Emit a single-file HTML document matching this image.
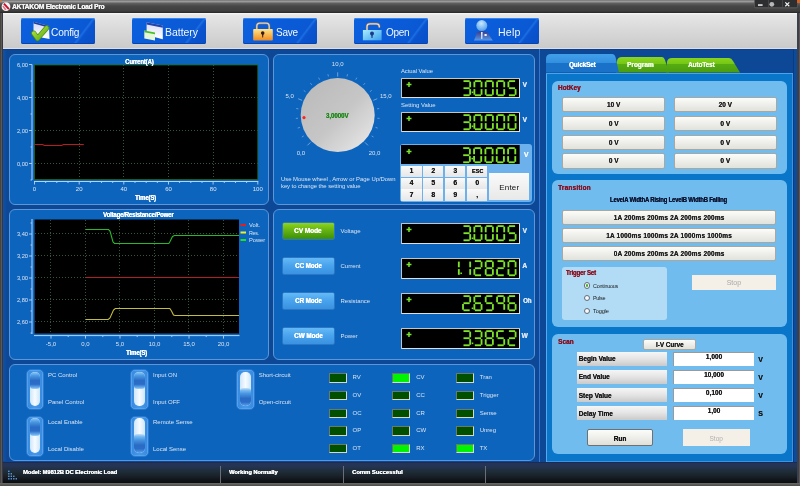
<!DOCTYPE html><html><head><meta charset="utf-8"><style>html,body{margin:0;padding:0;width:800px;height:486px;overflow:hidden;background:#3b3b3b}body{position:relative;font-family:"Liberation Sans",sans-serif}span{-webkit-font-smoothing:antialiased}</style></head><body><div style="position:absolute;left:0;top:0;width:800px;height:486px;background:#3a3633"></div><div style="position:absolute;left:0px;top:13px;width:3px;height:470px;background:linear-gradient(90deg,#454545 0,#454545 1px,#5e5852 1px,#5e5852 2.5px,#3a3640 2.5px)"></div><div style="position:absolute;left:797px;top:13px;width:3px;height:470px;background:linear-gradient(90deg,#3a4050 0,#3a4050 1.8px,#605850 1.8px,#605850 2.6px,#454545 2.6px)"></div><div style="position:absolute;left:0px;top:0px;width:800px;height:13px;background:linear-gradient(#747474 0,#9a9a9a 1.5px,#5e5e5e 3.5px,#474747 6px,#3e3e3e 11px,#2c2c2c 12.5px)"></div><div style="position:absolute;left:3px;top:13px;width:794px;height:36px;background:linear-gradient(#fafafa 0,#e6e6e6 2px,#d8d8d8 50%,#cbcbcb 34.5px,#dcdcec 35.5px)"></div><div style="position:absolute;left:3px;top:49px;width:794px;height:413px;background:linear-gradient(#0a3c86 0,#0d4896 1.5px)"></div><div style="position:absolute;left:3px;top:50px;width:4px;height:411px;background:linear-gradient(90deg,#0f52aa,#0d4896)"></div><div style="position:absolute;left:792.5px;top:49px;width:4.5px;height:413px;background:linear-gradient(90deg,#0a3a80 0,#0a3a80 1px,#0c4a9a 1.5px)"></div><div style="position:absolute;left:3px;top:461.5px;width:794px;height:21.5px;background:linear-gradient(#15244a 0,#24345a 1.2px,#243454 4px,#1e2c36 10px,#181e26 15px,#0c0e12 20px,#0a0c10 21.5px)"></div><div style="position:absolute;left:0px;top:483px;width:800px;height:3px;background:linear-gradient(#6a6a66,#4c4c4a)"></div><svg style="position:absolute;left:0;top:0" width="13" height="13" viewBox="0 0 13 13"><rect x="0" y="0" width="1.5" height="1.5" fill="#e07020"/><circle cx="6" cy="6.7" r="4.4" fill="#f4f4f4"/><path d="M3.2 4.2 L4.6 3 L9.6 8.6 L8.2 9.8 Z" fill="#c8102a"/><path d="M2.4 6.5 L3.4 5.6 L6.6 9.6 L5 10.3 Z" fill="#d84050" opacity="0.7"/></svg><svg style="position:absolute;left:753.5px;top:0" width="44" height="9" viewBox="0 0 44 9"><rect x="0.3" y="-2" width="43.4" height="9.8" rx="1.5" fill="#2c2e30" stroke="#767676" stroke-width="0.6"/><line x1="14.5" y1="0" x2="14.5" y2="7.5" stroke="#555" stroke-width="0.6"/><line x1="28.5" y1="0" x2="28.5" y2="7.5" stroke="#555" stroke-width="0.6"/><rect x="4" y="4.3" width="4.6" height="1.5" fill="#f0f0f0"/><circle cx="17.8" cy="4.3" r="2.4" fill="#b8b8b8"/><path d="M31.3 2.4 L35.3 6.2 M35.3 2.4 L31.3 6.2" stroke="#f4f4f4" stroke-width="1.2"/></svg><div style="position:absolute;left:797px;top:0px;width:3px;height:3px;background:#d86020"></div><div style="position:absolute;left:20.5px;top:18px;width:74px;height:26px;border-radius:2px;background:linear-gradient(127deg,#0c60de 0%,#0a58d4 76%,#1c6ee2 78%,#0a54d0 81%,#084ec6 100%);box-shadow:inset 0 1px 0 #3486f0, inset 0 -1px 0 #0644b0"></div><div style="position:absolute;left:131.5px;top:18px;width:74px;height:26px;border-radius:2px;background:linear-gradient(127deg,#0c60de 0%,#0a58d4 76%,#1c6ee2 78%,#0a54d0 81%,#084ec6 100%);box-shadow:inset 0 1px 0 #3486f0, inset 0 -1px 0 #0644b0"></div><div style="position:absolute;left:242.5px;top:18px;width:74px;height:26px;border-radius:2px;background:linear-gradient(127deg,#0c60de 0%,#0a58d4 76%,#1c6ee2 78%,#0a54d0 81%,#084ec6 100%);box-shadow:inset 0 1px 0 #3486f0, inset 0 -1px 0 #0644b0"></div><div style="position:absolute;left:353.5px;top:18px;width:74px;height:26px;border-radius:2px;background:linear-gradient(127deg,#0c60de 0%,#0a58d4 76%,#1c6ee2 78%,#0a54d0 81%,#084ec6 100%);box-shadow:inset 0 1px 0 #3486f0, inset 0 -1px 0 #0644b0"></div><div style="position:absolute;left:464.5px;top:18px;width:74px;height:26px;border-radius:2px;background:linear-gradient(127deg,#0c60de 0%,#0a58d4 76%,#1c6ee2 78%,#0a54d0 81%,#084ec6 100%);box-shadow:inset 0 1px 0 #3486f0, inset 0 -1px 0 #0644b0"></div><svg style="position:absolute;left:26px;top:17px" width="30" height="28" viewBox="0 0 30 28"><defs><linearGradient id="dc" x1="0" y1="0" x2="0" y2="1"><stop offset="0" stop-color="#d4d8f4"/><stop offset="1" stop-color="#ffffff"/></linearGradient><linearGradient id="ck" x1="0" y1="0" x2="1" y2="1"><stop offset="0" stop-color="#b4e840"/><stop offset="1" stop-color="#5aa812"/></linearGradient></defs><path d="M7.5 4.8 L23 9 L23.5 22 L7.5 19 Z" fill="url(#dc)"/><path d="M7.5 4.8 L23 9 L23 10.8 L7.5 6.6 Z" fill="#22409a"/><polyline points="7.8,16.2 11.6,21.4 20.6,11" fill="none" stroke="#4a8c10" stroke-width="5.2" stroke-linecap="round" stroke-linejoin="round"/><polyline points="7.8,16.2 11.6,21.4 20.6,11" fill="none" stroke="url(#ck)" stroke-width="3.8" stroke-linecap="round" stroke-linejoin="round"/></svg><svg style="position:absolute;left:138px;top:17px" width="30" height="28" viewBox="0 0 30 28"><defs><linearGradient id="bw" x1="0" y1="0" x2="0" y2="1"><stop offset="0" stop-color="#dcdcf8"/><stop offset="1" stop-color="#ffffff"/></linearGradient></defs><path d="M8.6 5.2 L24.8 8.6 L24.8 22.2 L8.6 18 Z" fill="url(#bw)"/><path d="M8.6 5.2 L24.8 8.6 L24.8 10.8 L8.6 7.4 Z" fill="#2444a8"/><path d="M6.3 13.5 L17 15.5 L17 23.6 L6.3 21.6 Z" fill="#e4f8d8"/><path d="M6.3 13.5 L17 15.5 L17 17.2 L6.3 15.2 Z" fill="#44c024"/></svg><svg style="position:absolute;left:248px;top:17px" width="30" height="28" viewBox="0 0 30 28"><defs><linearGradient id="lk" x1="0" y1="0" x2="0" y2="1"><stop offset="0" stop-color="#ffe488"/><stop offset="1" stop-color="#f08a1c"/></linearGradient></defs><path d="M8.8 12.5 V9.2 Q8.8 6.2 11.8 6.2 H18.2 Q21.2 6.2 21.2 9.2 V12.5" fill="none" stroke="#6a6a6a" stroke-width="2.4"/><path d="M8.8 12.5 V9.2 Q8.8 6.2 11.8 6.2 H18.2 Q21.2 6.2 21.2 9.2 V12.5" fill="none" stroke="#d8d8d8" stroke-width="1.3"/><rect x="5.2" y="12.1" width="19.6" height="11.5" rx="0.8" fill="url(#lk)"/><circle cx="14.7" cy="16.1" r="1.8" fill="#3a1a10"/><path d="M14 17 L15.4 17 L15.1 20.4 L14.3 20.4 Z" fill="#3a1a10"/></svg><svg style="position:absolute;left:358px;top:17px" width="30" height="28" viewBox="0 0 30 28"><defs><linearGradient id="lb" x1="0" y1="0" x2="1" y2="1"><stop offset="0" stop-color="#a8ecff"/><stop offset="1" stop-color="#3aa0ec"/></linearGradient></defs><path d="M9 13 V9.5 Q9 6.8 12 6.8 H18.3 Q21.3 6.8 21.3 9.5 V10.6" fill="none" stroke="#7a6a60" stroke-width="2.4"/><path d="M9 13 V9.5 Q9 6.8 12 6.8 H18.3 Q21.3 6.8 21.3 9.5 V10.6" fill="none" stroke="#e8e0d8" stroke-width="1.3"/><rect x="4.9" y="13" width="18.7" height="10.3" fill="url(#lb)"/><circle cx="14" cy="16.6" r="2" fill="#1a3a8a"/><path d="M13.2 17.5 L14.8 17.5 L14.5 21 L13.5 21 Z" fill="#1a3a8a"/></svg><svg style="position:absolute;left:468px;top:17px" width="30" height="28" viewBox="0 0 30 28"><defs><radialGradient id="hp" cx="0.45" cy="0.3" r="0.75"><stop offset="0" stop-color="#c8e8ff"/><stop offset="1" stop-color="#4a9ae8"/></radialGradient><linearGradient id="hb" x1="0" y1="0" x2="0" y2="1"><stop offset="0" stop-color="#3a3a8a"/><stop offset="1" stop-color="#5a9ae8"/></linearGradient></defs><path d="M6 23.6 L9 15.5 Q14 12.8 19.5 15.5 L24.8 23.6 Z" fill="url(#hb)"/><circle cx="13.8" cy="8.6" r="5.5" fill="url(#hp)"/><path d="M13 15 L14.6 15 L14.3 22 L13.3 22 Z" fill="#e8f0ff"/><rect x="16.5" y="17" width="2.2" height="2" fill="#f4f4f4"/></svg><div style="position:absolute;left:9px;top:54px;width:258px;height:149px;background:#0c64bd;border:1px solid #5a96d8;border-radius:6px"></div><div style="position:absolute;left:9px;top:209px;width:258px;height:149px;background:#0c64bd;border:1px solid #5a96d8;border-radius:6px"></div><div style="position:absolute;left:273px;top:54px;width:260px;height:149px;background:#0c64bd;border:1px solid #5a96d8;border-radius:6px"></div><div style="position:absolute;left:273px;top:209px;width:260px;height:149px;background:#0c64bd;border:1px solid #5a96d8;border-radius:6px"></div><div style="position:absolute;left:9px;top:364px;width:524px;height:95px;background:#0c64bd;border:1px solid #5a96d8;border-radius:6px"></div><div style="position:absolute;left:539px;top:49px;width:1px;height:413px;background:#3476cf"></div><svg style="position:absolute;left:0;top:0" width="800" height="486"><rect x="34.5" y="65" width="223.3" height="114.5" fill="#000"/><rect x="34.5" y="65" width="223.3" height="114.5" fill="none" stroke="#1a6a1a" stroke-width="0.8"/><line x1="79.5" y1="65" x2="79.5" y2="179.5" stroke="#34563a" stroke-width="1" stroke-dasharray="1 2"/><line x1="123.5" y1="65" x2="123.5" y2="179.5" stroke="#34563a" stroke-width="1" stroke-dasharray="1 2"/><line x1="168.5" y1="65" x2="168.5" y2="179.5" stroke="#34563a" stroke-width="1" stroke-dasharray="1 2"/><line x1="213.5" y1="65" x2="213.5" y2="179.5" stroke="#34563a" stroke-width="1" stroke-dasharray="1 2"/><line x1="35" y1="163.5" x2="257.8" y2="163.5" stroke="#34563a" stroke-width="1" stroke-dasharray="1 2"/><line x1="35" y1="130.5" x2="257.8" y2="130.5" stroke="#34563a" stroke-width="1" stroke-dasharray="1 2"/><line x1="35" y1="97.5" x2="257.8" y2="97.5" stroke="#34563a" stroke-width="1" stroke-dasharray="1 2"/><line x1="32" y1="64.5" x2="32" y2="180" stroke="#b8d4f4" stroke-width="1"/><line x1="30.5" y1="180.0" x2="32" y2="180.0" stroke="#b8d4f4" stroke-width="0.9"/><line x1="29" y1="163.5" x2="32" y2="163.5" stroke="#b8d4f4" stroke-width="0.9"/><line x1="30.5" y1="147.0" x2="32" y2="147.0" stroke="#b8d4f4" stroke-width="0.9"/><line x1="29" y1="130.5" x2="32" y2="130.5" stroke="#b8d4f4" stroke-width="0.9"/><line x1="30.5" y1="114.0" x2="32" y2="114.0" stroke="#b8d4f4" stroke-width="0.9"/><line x1="29" y1="97.5" x2="32" y2="97.5" stroke="#b8d4f4" stroke-width="0.9"/><line x1="30.5" y1="81.0" x2="32" y2="81.0" stroke="#b8d4f4" stroke-width="0.9"/><line x1="29" y1="64.5" x2="32" y2="64.5" stroke="#b8d4f4" stroke-width="0.9"/><line x1="34" y1="181.5" x2="258.3" y2="181.5" stroke="#b8d4f4" stroke-width="1"/><line x1="34.5" y1="181.5" x2="34.5" y2="184.5" stroke="#b8d4f4" stroke-width="0.9"/><line x1="45.7" y1="181.5" x2="45.7" y2="183.0" stroke="#b8d4f4" stroke-width="0.9"/><line x1="56.8" y1="181.5" x2="56.8" y2="183.0" stroke="#b8d4f4" stroke-width="0.9"/><line x1="68.0" y1="181.5" x2="68.0" y2="183.0" stroke="#b8d4f4" stroke-width="0.9"/><line x1="79.2" y1="181.5" x2="79.2" y2="184.5" stroke="#b8d4f4" stroke-width="0.9"/><line x1="90.3" y1="181.5" x2="90.3" y2="183.0" stroke="#b8d4f4" stroke-width="0.9"/><line x1="101.5" y1="181.5" x2="101.5" y2="183.0" stroke="#b8d4f4" stroke-width="0.9"/><line x1="112.7" y1="181.5" x2="112.7" y2="183.0" stroke="#b8d4f4" stroke-width="0.9"/><line x1="123.8" y1="181.5" x2="123.8" y2="184.5" stroke="#b8d4f4" stroke-width="0.9"/><line x1="135.0" y1="181.5" x2="135.0" y2="183.0" stroke="#b8d4f4" stroke-width="0.9"/><line x1="146.2" y1="181.5" x2="146.2" y2="183.0" stroke="#b8d4f4" stroke-width="0.9"/><line x1="157.3" y1="181.5" x2="157.3" y2="183.0" stroke="#b8d4f4" stroke-width="0.9"/><line x1="168.5" y1="181.5" x2="168.5" y2="184.5" stroke="#b8d4f4" stroke-width="0.9"/><line x1="179.6" y1="181.5" x2="179.6" y2="183.0" stroke="#b8d4f4" stroke-width="0.9"/><line x1="190.8" y1="181.5" x2="190.8" y2="183.0" stroke="#b8d4f4" stroke-width="0.9"/><line x1="202.0" y1="181.5" x2="202.0" y2="183.0" stroke="#b8d4f4" stroke-width="0.9"/><line x1="213.1" y1="181.5" x2="213.1" y2="184.5" stroke="#b8d4f4" stroke-width="0.9"/><line x1="224.3" y1="181.5" x2="224.3" y2="183.0" stroke="#b8d4f4" stroke-width="0.9"/><line x1="235.5" y1="181.5" x2="235.5" y2="183.0" stroke="#b8d4f4" stroke-width="0.9"/><line x1="246.6" y1="181.5" x2="246.6" y2="183.0" stroke="#b8d4f4" stroke-width="0.9"/><line x1="257.8" y1="181.5" x2="257.8" y2="184.5" stroke="#b8d4f4" stroke-width="0.9"/><polyline points="34.5,144.5 42.5,144.5 44.5,145.5 61.5,145.5 63.5,144.5 83.8,144.5" fill="none" stroke="#b81c1c" stroke-width="1.2"/></svg><svg style="position:absolute;left:0;top:0" width="800" height="486"><rect x="34.6" y="219.5" width="204.4" height="114" fill="#000"/><line x1="50.5" y1="220" x2="50.5" y2="333.5" stroke="#34563a" stroke-width="1" stroke-dasharray="1 2"/><line x1="85.5" y1="220" x2="85.5" y2="333.5" stroke="#34563a" stroke-width="1" stroke-dasharray="1 2"/><line x1="119.5" y1="220" x2="119.5" y2="333.5" stroke="#34563a" stroke-width="1" stroke-dasharray="1 2"/><line x1="154.5" y1="220" x2="154.5" y2="333.5" stroke="#34563a" stroke-width="1" stroke-dasharray="1 2"/><line x1="188.5" y1="220" x2="188.5" y2="333.5" stroke="#34563a" stroke-width="1" stroke-dasharray="1 2"/><line x1="223.5" y1="220" x2="223.5" y2="333.5" stroke="#34563a" stroke-width="1" stroke-dasharray="1 2"/><line x1="35" y1="321.5" x2="239" y2="321.5" stroke="#34563a" stroke-width="1" stroke-dasharray="1 2"/><line x1="35" y1="299.5" x2="239" y2="299.5" stroke="#34563a" stroke-width="1" stroke-dasharray="1 2"/><line x1="35" y1="277.5" x2="239" y2="277.5" stroke="#34563a" stroke-width="1" stroke-dasharray="1 2"/><line x1="35" y1="255.5" x2="239" y2="255.5" stroke="#34563a" stroke-width="1" stroke-dasharray="1 2"/><line x1="35" y1="233.5" x2="239" y2="233.5" stroke="#34563a" stroke-width="1" stroke-dasharray="1 2"/><line x1="32" y1="219" x2="32" y2="334" stroke="#b8d4f4" stroke-width="1"/><line x1="30.5" y1="333.0" x2="32" y2="333.0" stroke="#b8d4f4" stroke-width="0.9"/><line x1="29" y1="322.0" x2="32" y2="322.0" stroke="#b8d4f4" stroke-width="0.9"/><line x1="30.5" y1="311.0" x2="32" y2="311.0" stroke="#b8d4f4" stroke-width="0.9"/><line x1="29" y1="300.0" x2="32" y2="300.0" stroke="#b8d4f4" stroke-width="0.9"/><line x1="30.5" y1="289.0" x2="32" y2="289.0" stroke="#b8d4f4" stroke-width="0.9"/><line x1="29" y1="278.0" x2="32" y2="278.0" stroke="#b8d4f4" stroke-width="0.9"/><line x1="30.5" y1="267.0" x2="32" y2="267.0" stroke="#b8d4f4" stroke-width="0.9"/><line x1="29" y1="256.0" x2="32" y2="256.0" stroke="#b8d4f4" stroke-width="0.9"/><line x1="30.5" y1="245.0" x2="32" y2="245.0" stroke="#b8d4f4" stroke-width="0.9"/><line x1="29" y1="234.0" x2="32" y2="234.0" stroke="#b8d4f4" stroke-width="0.9"/><line x1="30.5" y1="223.0" x2="32" y2="223.0" stroke="#b8d4f4" stroke-width="0.9"/><line x1="34" y1="335.6" x2="239.5" y2="335.6" stroke="#b8d4f4" stroke-width="1"/><line x1="51.0" y1="335.6" x2="51.0" y2="338.6" stroke="#b8d4f4" stroke-width="0.9"/><line x1="68.2" y1="335.6" x2="68.2" y2="337.1" stroke="#b8d4f4" stroke-width="0.9"/><line x1="85.5" y1="335.6" x2="85.5" y2="338.6" stroke="#b8d4f4" stroke-width="0.9"/><line x1="102.8" y1="335.6" x2="102.8" y2="337.1" stroke="#b8d4f4" stroke-width="0.9"/><line x1="120.0" y1="335.6" x2="120.0" y2="338.6" stroke="#b8d4f4" stroke-width="0.9"/><line x1="137.2" y1="335.6" x2="137.2" y2="337.1" stroke="#b8d4f4" stroke-width="0.9"/><line x1="154.5" y1="335.6" x2="154.5" y2="338.6" stroke="#b8d4f4" stroke-width="0.9"/><line x1="171.8" y1="335.6" x2="171.8" y2="337.1" stroke="#b8d4f4" stroke-width="0.9"/><line x1="189.0" y1="335.6" x2="189.0" y2="338.6" stroke="#b8d4f4" stroke-width="0.9"/><line x1="206.2" y1="335.6" x2="206.2" y2="337.1" stroke="#b8d4f4" stroke-width="0.9"/><line x1="223.5" y1="335.6" x2="223.5" y2="338.6" stroke="#b8d4f4" stroke-width="0.9"/><polyline points="85.5,229.5 108.5,229.5 110,231 113,242 114.5,243.5 168.8,243.5 170,241.5 172.5,236.5 174.4,235.5 239,235.5" fill="none" stroke="#28b828" stroke-width="1.1"/><polyline points="85.5,319.5 108.2,319.5 110,318 113.5,310 115.3,308.5 169.8,308.5 171.5,311 173.5,315 175,315.5 239,315.5" fill="none" stroke="#c4bc3c" stroke-width="1.1"/><line x1="85.5" y1="277.5" x2="239" y2="277.5" stroke="#b02020" stroke-width="1.1"/><rect x="240.5" y="224" width="5.5" height="2" fill="#e02020"/><rect x="240.5" y="231.5" width="5.5" height="2" fill="#f0f020"/><rect x="240.5" y="239" width="5.5" height="2" fill="#20e020"/></svg><svg style="position:absolute;left:0;top:0" width="800" height="486"><defs><linearGradient id="kn" x1="0.15" y1="0.2" x2="0.85" y2="0.9"><stop offset="0" stop-color="#bdbdbd"/><stop offset="0.5" stop-color="#c6c6c6"/><stop offset="1" stop-color="#e2e2e2"/></linearGradient></defs><circle cx="337.7" cy="115.1" r="37" fill="url(#kn)"/><line x1="310.48" y1="142.32" x2="307.44" y2="145.36" stroke="#b4cdf0" stroke-opacity="0.65" stroke-width="0.9"/><line x1="303.76" y1="135.90" x2="301.89" y2="137.04" stroke="#b4cdf0" stroke-opacity="0.65" stroke-width="0.8"/><line x1="299.85" y1="127.40" x2="297.76" y2="128.08" stroke="#b4cdf0" stroke-opacity="0.65" stroke-width="0.8"/><line x1="298.02" y1="118.22" x2="295.83" y2="118.40" stroke="#b4cdf0" stroke-opacity="0.65" stroke-width="0.8"/><line x1="298.39" y1="108.87" x2="296.22" y2="108.53" stroke="#b4cdf0" stroke-opacity="0.65" stroke-width="0.8"/><line x1="302.13" y1="100.37" x2="298.16" y2="98.72" stroke="#b4cdf0" stroke-opacity="0.65" stroke-width="0.9"/><line x1="305.50" y1="91.71" x2="303.72" y2="90.41" stroke="#b4cdf0" stroke-opacity="0.65" stroke-width="0.8"/><line x1="311.85" y1="84.84" x2="310.42" y2="83.16" stroke="#b4cdf0" stroke-opacity="0.65" stroke-width="0.8"/><line x1="319.63" y1="79.64" x2="318.63" y2="77.68" stroke="#b4cdf0" stroke-opacity="0.65" stroke-width="0.8"/><line x1="328.41" y1="76.40" x2="327.90" y2="74.26" stroke="#b4cdf0" stroke-opacity="0.65" stroke-width="0.8"/><line x1="337.70" y1="76.60" x2="337.70" y2="72.30" stroke="#b4cdf0" stroke-opacity="0.65" stroke-width="0.9"/><line x1="346.99" y1="76.40" x2="347.50" y2="74.26" stroke="#b4cdf0" stroke-opacity="0.65" stroke-width="0.8"/><line x1="355.77" y1="79.64" x2="356.77" y2="77.68" stroke="#b4cdf0" stroke-opacity="0.65" stroke-width="0.8"/><line x1="363.55" y1="84.84" x2="364.98" y2="83.16" stroke="#b4cdf0" stroke-opacity="0.65" stroke-width="0.8"/><line x1="369.90" y1="91.71" x2="371.68" y2="90.41" stroke="#b4cdf0" stroke-opacity="0.65" stroke-width="0.8"/><line x1="373.27" y1="100.37" x2="377.24" y2="98.72" stroke="#b4cdf0" stroke-opacity="0.65" stroke-width="0.9"/><line x1="377.01" y1="108.87" x2="379.18" y2="108.53" stroke="#b4cdf0" stroke-opacity="0.65" stroke-width="0.8"/><line x1="377.38" y1="118.22" x2="379.57" y2="118.40" stroke="#b4cdf0" stroke-opacity="0.65" stroke-width="0.8"/><line x1="375.55" y1="127.40" x2="377.64" y2="128.08" stroke="#b4cdf0" stroke-opacity="0.65" stroke-width="0.8"/><line x1="371.64" y1="135.90" x2="373.51" y2="137.04" stroke="#b4cdf0" stroke-opacity="0.65" stroke-width="0.8"/><line x1="364.92" y1="142.32" x2="367.96" y2="145.36" stroke="#b4cdf0" stroke-opacity="0.65" stroke-width="0.9"/><circle cx="304" cy="117.6" r="1.6" fill="#ff2020"/></svg><svg style="position:absolute;left:401px;top:77.5px" width="119" height="20" viewBox="0 0 119 20"><rect x="0" y="0" width="119" height="20" fill="#a8a8a8"/><rect x="0.5" y="0.5" width="118.5" height="19.5" fill="#e0e0d8"/><rect x="1" y="1" width="117" height="18" fill="#000"/><path d="M5.5 6.5 H10.5 M8 4 V9" stroke="#7ae42c" stroke-width="1.5"/><line x1="62.50" y1="3.12" x2="68.70" y2="3.12" stroke="#7ee42a" stroke-width="1.85" stroke-linecap="butt"/><line x1="69.17" y1="3.60" x2="69.17" y2="9.30" stroke="#7ee42a" stroke-width="1.85" stroke-linecap="butt"/><line x1="62.50" y1="10.20" x2="68.70" y2="10.20" stroke="#7ee42a" stroke-width="1.85" stroke-linecap="butt"/><line x1="69.17" y1="11.10" x2="69.17" y2="16.80" stroke="#7ee42a" stroke-width="1.85" stroke-linecap="butt"/><line x1="62.50" y1="17.27" x2="68.70" y2="17.27" stroke="#7ee42a" stroke-width="1.85" stroke-linecap="butt"/><line x1="73.85" y1="3.12" x2="80.05" y2="3.12" stroke="#7ee42a" stroke-width="1.85" stroke-linecap="butt"/><line x1="80.53" y1="3.60" x2="80.53" y2="9.30" stroke="#7ee42a" stroke-width="1.85" stroke-linecap="butt"/><line x1="80.53" y1="11.10" x2="80.53" y2="16.80" stroke="#7ee42a" stroke-width="1.85" stroke-linecap="butt"/><line x1="73.85" y1="17.27" x2="80.05" y2="17.27" stroke="#7ee42a" stroke-width="1.85" stroke-linecap="butt"/><line x1="73.38" y1="11.10" x2="73.38" y2="16.80" stroke="#7ee42a" stroke-width="1.85" stroke-linecap="butt"/><line x1="73.38" y1="3.60" x2="73.38" y2="9.30" stroke="#7ee42a" stroke-width="1.85" stroke-linecap="butt"/><line x1="85.20" y1="3.12" x2="91.40" y2="3.12" stroke="#7ee42a" stroke-width="1.85" stroke-linecap="butt"/><line x1="91.88" y1="3.60" x2="91.88" y2="9.30" stroke="#7ee42a" stroke-width="1.85" stroke-linecap="butt"/><line x1="91.88" y1="11.10" x2="91.88" y2="16.80" stroke="#7ee42a" stroke-width="1.85" stroke-linecap="butt"/><line x1="85.20" y1="17.27" x2="91.40" y2="17.27" stroke="#7ee42a" stroke-width="1.85" stroke-linecap="butt"/><line x1="84.72" y1="11.10" x2="84.72" y2="16.80" stroke="#7ee42a" stroke-width="1.85" stroke-linecap="butt"/><line x1="84.72" y1="3.60" x2="84.72" y2="9.30" stroke="#7ee42a" stroke-width="1.85" stroke-linecap="butt"/><line x1="96.55" y1="3.12" x2="102.75" y2="3.12" stroke="#7ee42a" stroke-width="1.85" stroke-linecap="butt"/><line x1="103.23" y1="3.60" x2="103.23" y2="9.30" stroke="#7ee42a" stroke-width="1.85" stroke-linecap="butt"/><line x1="103.23" y1="11.10" x2="103.23" y2="16.80" stroke="#7ee42a" stroke-width="1.85" stroke-linecap="butt"/><line x1="96.55" y1="17.27" x2="102.75" y2="17.27" stroke="#7ee42a" stroke-width="1.85" stroke-linecap="butt"/><line x1="96.08" y1="11.10" x2="96.08" y2="16.80" stroke="#7ee42a" stroke-width="1.85" stroke-linecap="butt"/><line x1="96.08" y1="3.60" x2="96.08" y2="9.30" stroke="#7ee42a" stroke-width="1.85" stroke-linecap="butt"/><line x1="107.90" y1="3.12" x2="114.10" y2="3.12" stroke="#7ee42a" stroke-width="1.85" stroke-linecap="butt"/><line x1="107.42" y1="3.60" x2="107.42" y2="9.30" stroke="#7ee42a" stroke-width="1.85" stroke-linecap="butt"/><line x1="107.90" y1="10.20" x2="114.10" y2="10.20" stroke="#7ee42a" stroke-width="1.85" stroke-linecap="butt"/><line x1="114.58" y1="11.10" x2="114.58" y2="16.80" stroke="#7ee42a" stroke-width="1.85" stroke-linecap="butt"/><line x1="107.90" y1="17.27" x2="114.10" y2="17.27" stroke="#7ee42a" stroke-width="1.85" stroke-linecap="butt"/><rect x="70.70" y="13.50" width="1.6" height="1.6" fill="#7ae42c"/></svg><svg style="position:absolute;left:401px;top:111.7px" width="119" height="20" viewBox="0 0 119 20"><rect x="0" y="0" width="119" height="20" fill="#a8a8a8"/><rect x="0.5" y="0.5" width="118.5" height="19.5" fill="#e0e0d8"/><rect x="1" y="1" width="117" height="18" fill="#000"/><path d="M5.5 6.5 H10.5 M8 4 V9" stroke="#7ae42c" stroke-width="1.5"/><line x1="62.50" y1="3.12" x2="68.70" y2="3.12" stroke="#7ee42a" stroke-width="1.85" stroke-linecap="butt"/><line x1="69.17" y1="3.60" x2="69.17" y2="9.30" stroke="#7ee42a" stroke-width="1.85" stroke-linecap="butt"/><line x1="62.50" y1="10.20" x2="68.70" y2="10.20" stroke="#7ee42a" stroke-width="1.85" stroke-linecap="butt"/><line x1="69.17" y1="11.10" x2="69.17" y2="16.80" stroke="#7ee42a" stroke-width="1.85" stroke-linecap="butt"/><line x1="62.50" y1="17.27" x2="68.70" y2="17.27" stroke="#7ee42a" stroke-width="1.85" stroke-linecap="butt"/><line x1="73.85" y1="3.12" x2="80.05" y2="3.12" stroke="#7ee42a" stroke-width="1.85" stroke-linecap="butt"/><line x1="80.53" y1="3.60" x2="80.53" y2="9.30" stroke="#7ee42a" stroke-width="1.85" stroke-linecap="butt"/><line x1="80.53" y1="11.10" x2="80.53" y2="16.80" stroke="#7ee42a" stroke-width="1.85" stroke-linecap="butt"/><line x1="73.85" y1="17.27" x2="80.05" y2="17.27" stroke="#7ee42a" stroke-width="1.85" stroke-linecap="butt"/><line x1="73.38" y1="11.10" x2="73.38" y2="16.80" stroke="#7ee42a" stroke-width="1.85" stroke-linecap="butt"/><line x1="73.38" y1="3.60" x2="73.38" y2="9.30" stroke="#7ee42a" stroke-width="1.85" stroke-linecap="butt"/><line x1="85.20" y1="3.12" x2="91.40" y2="3.12" stroke="#7ee42a" stroke-width="1.85" stroke-linecap="butt"/><line x1="91.88" y1="3.60" x2="91.88" y2="9.30" stroke="#7ee42a" stroke-width="1.85" stroke-linecap="butt"/><line x1="91.88" y1="11.10" x2="91.88" y2="16.80" stroke="#7ee42a" stroke-width="1.85" stroke-linecap="butt"/><line x1="85.20" y1="17.27" x2="91.40" y2="17.27" stroke="#7ee42a" stroke-width="1.85" stroke-linecap="butt"/><line x1="84.72" y1="11.10" x2="84.72" y2="16.80" stroke="#7ee42a" stroke-width="1.85" stroke-linecap="butt"/><line x1="84.72" y1="3.60" x2="84.72" y2="9.30" stroke="#7ee42a" stroke-width="1.85" stroke-linecap="butt"/><line x1="96.55" y1="3.12" x2="102.75" y2="3.12" stroke="#7ee42a" stroke-width="1.85" stroke-linecap="butt"/><line x1="103.23" y1="3.60" x2="103.23" y2="9.30" stroke="#7ee42a" stroke-width="1.85" stroke-linecap="butt"/><line x1="103.23" y1="11.10" x2="103.23" y2="16.80" stroke="#7ee42a" stroke-width="1.85" stroke-linecap="butt"/><line x1="96.55" y1="17.27" x2="102.75" y2="17.27" stroke="#7ee42a" stroke-width="1.85" stroke-linecap="butt"/><line x1="96.08" y1="11.10" x2="96.08" y2="16.80" stroke="#7ee42a" stroke-width="1.85" stroke-linecap="butt"/><line x1="96.08" y1="3.60" x2="96.08" y2="9.30" stroke="#7ee42a" stroke-width="1.85" stroke-linecap="butt"/><line x1="107.90" y1="3.12" x2="114.10" y2="3.12" stroke="#7ee42a" stroke-width="1.85" stroke-linecap="butt"/><line x1="114.58" y1="3.60" x2="114.58" y2="9.30" stroke="#7ee42a" stroke-width="1.85" stroke-linecap="butt"/><line x1="114.58" y1="11.10" x2="114.58" y2="16.80" stroke="#7ee42a" stroke-width="1.85" stroke-linecap="butt"/><line x1="107.90" y1="17.27" x2="114.10" y2="17.27" stroke="#7ee42a" stroke-width="1.85" stroke-linecap="butt"/><line x1="107.42" y1="11.10" x2="107.42" y2="16.80" stroke="#7ee42a" stroke-width="1.85" stroke-linecap="butt"/><line x1="107.42" y1="3.60" x2="107.42" y2="9.30" stroke="#7ee42a" stroke-width="1.85" stroke-linecap="butt"/><rect x="70.70" y="13.50" width="1.6" height="1.6" fill="#7ae42c"/></svg><div style="position:absolute;left:400.4px;top:144.3px;width:131.4px;height:58px;background:#6cb0ec;border-radius:3px"></div><svg style="position:absolute;left:401.3px;top:145px" width="118.7" height="19.3" viewBox="0 0 118.7 19.3"><rect x="0" y="0" width="118.7" height="19.3" fill="#000"/><path d="M5.5 6.5 H10.5 M8 4 V9" stroke="#7ae42c" stroke-width="1.5"/><line x1="62.20" y1="3.12" x2="68.40" y2="3.12" stroke="#7ee42a" stroke-width="1.85" stroke-linecap="butt"/><line x1="68.88" y1="3.60" x2="68.88" y2="9.30" stroke="#7ee42a" stroke-width="1.85" stroke-linecap="butt"/><line x1="62.20" y1="10.20" x2="68.40" y2="10.20" stroke="#7ee42a" stroke-width="1.85" stroke-linecap="butt"/><line x1="68.88" y1="11.10" x2="68.88" y2="16.80" stroke="#7ee42a" stroke-width="1.85" stroke-linecap="butt"/><line x1="62.20" y1="17.27" x2="68.40" y2="17.27" stroke="#7ee42a" stroke-width="1.85" stroke-linecap="butt"/><line x1="73.55" y1="3.12" x2="79.75" y2="3.12" stroke="#7ee42a" stroke-width="1.85" stroke-linecap="butt"/><line x1="80.23" y1="3.60" x2="80.23" y2="9.30" stroke="#7ee42a" stroke-width="1.85" stroke-linecap="butt"/><line x1="80.23" y1="11.10" x2="80.23" y2="16.80" stroke="#7ee42a" stroke-width="1.85" stroke-linecap="butt"/><line x1="73.55" y1="17.27" x2="79.75" y2="17.27" stroke="#7ee42a" stroke-width="1.85" stroke-linecap="butt"/><line x1="73.08" y1="11.10" x2="73.08" y2="16.80" stroke="#7ee42a" stroke-width="1.85" stroke-linecap="butt"/><line x1="73.08" y1="3.60" x2="73.08" y2="9.30" stroke="#7ee42a" stroke-width="1.85" stroke-linecap="butt"/><line x1="84.90" y1="3.12" x2="91.10" y2="3.12" stroke="#7ee42a" stroke-width="1.85" stroke-linecap="butt"/><line x1="91.58" y1="3.60" x2="91.58" y2="9.30" stroke="#7ee42a" stroke-width="1.85" stroke-linecap="butt"/><line x1="91.58" y1="11.10" x2="91.58" y2="16.80" stroke="#7ee42a" stroke-width="1.85" stroke-linecap="butt"/><line x1="84.90" y1="17.27" x2="91.10" y2="17.27" stroke="#7ee42a" stroke-width="1.85" stroke-linecap="butt"/><line x1="84.42" y1="11.10" x2="84.42" y2="16.80" stroke="#7ee42a" stroke-width="1.85" stroke-linecap="butt"/><line x1="84.42" y1="3.60" x2="84.42" y2="9.30" stroke="#7ee42a" stroke-width="1.85" stroke-linecap="butt"/><line x1="96.25" y1="3.12" x2="102.45" y2="3.12" stroke="#7ee42a" stroke-width="1.85" stroke-linecap="butt"/><line x1="102.92" y1="3.60" x2="102.92" y2="9.30" stroke="#7ee42a" stroke-width="1.85" stroke-linecap="butt"/><line x1="102.92" y1="11.10" x2="102.92" y2="16.80" stroke="#7ee42a" stroke-width="1.85" stroke-linecap="butt"/><line x1="96.25" y1="17.27" x2="102.45" y2="17.27" stroke="#7ee42a" stroke-width="1.85" stroke-linecap="butt"/><line x1="95.77" y1="11.10" x2="95.77" y2="16.80" stroke="#7ee42a" stroke-width="1.85" stroke-linecap="butt"/><line x1="95.77" y1="3.60" x2="95.77" y2="9.30" stroke="#7ee42a" stroke-width="1.85" stroke-linecap="butt"/><line x1="107.60" y1="3.12" x2="113.80" y2="3.12" stroke="#7ee42a" stroke-width="1.85" stroke-linecap="butt"/><line x1="114.28" y1="3.60" x2="114.28" y2="9.30" stroke="#7ee42a" stroke-width="1.85" stroke-linecap="butt"/><line x1="114.28" y1="11.10" x2="114.28" y2="16.80" stroke="#7ee42a" stroke-width="1.85" stroke-linecap="butt"/><line x1="107.60" y1="17.27" x2="113.80" y2="17.27" stroke="#7ee42a" stroke-width="1.85" stroke-linecap="butt"/><line x1="107.12" y1="11.10" x2="107.12" y2="16.80" stroke="#7ee42a" stroke-width="1.85" stroke-linecap="butt"/><line x1="107.12" y1="3.60" x2="107.12" y2="9.30" stroke="#7ee42a" stroke-width="1.85" stroke-linecap="butt"/><rect x="70.40" y="12.80" width="1.6" height="1.6" fill="#7ae42c"/></svg><div style="position:absolute;left:401.3px;top:165.5px;width:20.3px;height:11.3px;background:linear-gradient(#fafafa,#e6e6e6)"></div><div style="position:absolute;left:423px;top:165.5px;width:20.3px;height:11.3px;background:linear-gradient(#fafafa,#e6e6e6)"></div><div style="position:absolute;left:445px;top:165.5px;width:20.3px;height:11.3px;background:linear-gradient(#fafafa,#e6e6e6)"></div><div style="position:absolute;left:467px;top:165.5px;width:20.3px;height:11.3px;background:linear-gradient(#fafafa,#e6e6e6)"></div><div style="position:absolute;left:401.3px;top:177.5px;width:20.3px;height:11.3px;background:linear-gradient(#fafafa,#e6e6e6)"></div><div style="position:absolute;left:423px;top:177.5px;width:20.3px;height:11.3px;background:linear-gradient(#fafafa,#e6e6e6)"></div><div style="position:absolute;left:445px;top:177.5px;width:20.3px;height:11.3px;background:linear-gradient(#fafafa,#e6e6e6)"></div><div style="position:absolute;left:467px;top:177.5px;width:20.3px;height:11.3px;background:linear-gradient(#fafafa,#e6e6e6)"></div><div style="position:absolute;left:401.3px;top:189.3px;width:20.3px;height:11.3px;background:linear-gradient(#fafafa,#e6e6e6)"></div><div style="position:absolute;left:423px;top:189.3px;width:20.3px;height:11.3px;background:linear-gradient(#fafafa,#e6e6e6)"></div><div style="position:absolute;left:445px;top:189.3px;width:20.3px;height:11.3px;background:linear-gradient(#fafafa,#e6e6e6)"></div><div style="position:absolute;left:467px;top:189.3px;width:20.3px;height:11.3px;background:linear-gradient(#fafafa,#e6e6e6)"></div><div style="position:absolute;left:489.3px;top:173.3px;width:39.7px;height:27.2px;background:linear-gradient(#fafafa,#e8e8e8)"></div><div style="position:absolute;left:282.6px;top:223px;width:51.3px;height:15.5px;background:linear-gradient(#8ed41e,#62b012 50%,#3c9008);border-radius:1px;box-shadow:0 0 0 0.5px rgba(255,255,255,0.25)"></div><svg style="position:absolute;left:401px;top:222.7px" width="119" height="21" viewBox="0 0 119 21"><rect x="0" y="0" width="119" height="21" fill="#a8a8a8"/><rect x="0.5" y="0.5" width="118.5" height="20.5" fill="#e0e0d8"/><rect x="1" y="1" width="117" height="19" fill="#000"/><path d="M5.5 6.5 H10.5 M8 4 V9" stroke="#7ae42c" stroke-width="1.5"/><line x1="62.50" y1="3.12" x2="68.70" y2="3.12" stroke="#7ee42a" stroke-width="1.85" stroke-linecap="butt"/><line x1="69.17" y1="3.60" x2="69.17" y2="9.30" stroke="#7ee42a" stroke-width="1.85" stroke-linecap="butt"/><line x1="62.50" y1="10.20" x2="68.70" y2="10.20" stroke="#7ee42a" stroke-width="1.85" stroke-linecap="butt"/><line x1="69.17" y1="11.10" x2="69.17" y2="16.80" stroke="#7ee42a" stroke-width="1.85" stroke-linecap="butt"/><line x1="62.50" y1="17.27" x2="68.70" y2="17.27" stroke="#7ee42a" stroke-width="1.85" stroke-linecap="butt"/><line x1="73.85" y1="3.12" x2="80.05" y2="3.12" stroke="#7ee42a" stroke-width="1.85" stroke-linecap="butt"/><line x1="80.53" y1="3.60" x2="80.53" y2="9.30" stroke="#7ee42a" stroke-width="1.85" stroke-linecap="butt"/><line x1="80.53" y1="11.10" x2="80.53" y2="16.80" stroke="#7ee42a" stroke-width="1.85" stroke-linecap="butt"/><line x1="73.85" y1="17.27" x2="80.05" y2="17.27" stroke="#7ee42a" stroke-width="1.85" stroke-linecap="butt"/><line x1="73.38" y1="11.10" x2="73.38" y2="16.80" stroke="#7ee42a" stroke-width="1.85" stroke-linecap="butt"/><line x1="73.38" y1="3.60" x2="73.38" y2="9.30" stroke="#7ee42a" stroke-width="1.85" stroke-linecap="butt"/><line x1="85.20" y1="3.12" x2="91.40" y2="3.12" stroke="#7ee42a" stroke-width="1.85" stroke-linecap="butt"/><line x1="91.88" y1="3.60" x2="91.88" y2="9.30" stroke="#7ee42a" stroke-width="1.85" stroke-linecap="butt"/><line x1="91.88" y1="11.10" x2="91.88" y2="16.80" stroke="#7ee42a" stroke-width="1.85" stroke-linecap="butt"/><line x1="85.20" y1="17.27" x2="91.40" y2="17.27" stroke="#7ee42a" stroke-width="1.85" stroke-linecap="butt"/><line x1="84.72" y1="11.10" x2="84.72" y2="16.80" stroke="#7ee42a" stroke-width="1.85" stroke-linecap="butt"/><line x1="84.72" y1="3.60" x2="84.72" y2="9.30" stroke="#7ee42a" stroke-width="1.85" stroke-linecap="butt"/><line x1="96.55" y1="3.12" x2="102.75" y2="3.12" stroke="#7ee42a" stroke-width="1.85" stroke-linecap="butt"/><line x1="103.23" y1="3.60" x2="103.23" y2="9.30" stroke="#7ee42a" stroke-width="1.85" stroke-linecap="butt"/><line x1="103.23" y1="11.10" x2="103.23" y2="16.80" stroke="#7ee42a" stroke-width="1.85" stroke-linecap="butt"/><line x1="96.55" y1="17.27" x2="102.75" y2="17.27" stroke="#7ee42a" stroke-width="1.85" stroke-linecap="butt"/><line x1="96.08" y1="11.10" x2="96.08" y2="16.80" stroke="#7ee42a" stroke-width="1.85" stroke-linecap="butt"/><line x1="96.08" y1="3.60" x2="96.08" y2="9.30" stroke="#7ee42a" stroke-width="1.85" stroke-linecap="butt"/><line x1="107.90" y1="3.12" x2="114.10" y2="3.12" stroke="#7ee42a" stroke-width="1.85" stroke-linecap="butt"/><line x1="107.42" y1="3.60" x2="107.42" y2="9.30" stroke="#7ee42a" stroke-width="1.85" stroke-linecap="butt"/><line x1="107.90" y1="10.20" x2="114.10" y2="10.20" stroke="#7ee42a" stroke-width="1.85" stroke-linecap="butt"/><line x1="114.58" y1="11.10" x2="114.58" y2="16.80" stroke="#7ee42a" stroke-width="1.85" stroke-linecap="butt"/><line x1="107.90" y1="17.27" x2="114.10" y2="17.27" stroke="#7ee42a" stroke-width="1.85" stroke-linecap="butt"/><rect x="70.70" y="14.50" width="1.6" height="1.6" fill="#7ae42c"/></svg><div style="position:absolute;left:282.6px;top:258px;width:51.3px;height:15.5px;background:linear-gradient(#64baf6,#48a2ec 50%,#3a92e0);border-radius:1px;box-shadow:0 0 0 0.5px rgba(255,255,255,0.25)"></div><svg style="position:absolute;left:401px;top:257.7px" width="119" height="21" viewBox="0 0 119 21"><rect x="0" y="0" width="119" height="21" fill="#a8a8a8"/><rect x="0.5" y="0.5" width="118.5" height="20.5" fill="#e0e0d8"/><rect x="1" y="1" width="117" height="19" fill="#000"/><path d="M5.5 6.5 H10.5 M8 4 V9" stroke="#7ae42c" stroke-width="1.5"/><line x1="57.83" y1="3.60" x2="57.83" y2="9.30" stroke="#7ee42a" stroke-width="1.85" stroke-linecap="butt"/><line x1="57.83" y1="11.10" x2="57.83" y2="16.80" stroke="#7ee42a" stroke-width="1.85" stroke-linecap="butt"/><line x1="69.17" y1="3.60" x2="69.17" y2="9.30" stroke="#7ee42a" stroke-width="1.85" stroke-linecap="butt"/><line x1="69.17" y1="11.10" x2="69.17" y2="16.80" stroke="#7ee42a" stroke-width="1.85" stroke-linecap="butt"/><line x1="73.85" y1="3.12" x2="80.05" y2="3.12" stroke="#7ee42a" stroke-width="1.85" stroke-linecap="butt"/><line x1="80.53" y1="3.60" x2="80.53" y2="9.30" stroke="#7ee42a" stroke-width="1.85" stroke-linecap="butt"/><line x1="73.85" y1="10.20" x2="80.05" y2="10.20" stroke="#7ee42a" stroke-width="1.85" stroke-linecap="butt"/><line x1="73.38" y1="11.10" x2="73.38" y2="16.80" stroke="#7ee42a" stroke-width="1.85" stroke-linecap="butt"/><line x1="73.85" y1="17.27" x2="80.05" y2="17.27" stroke="#7ee42a" stroke-width="1.85" stroke-linecap="butt"/><line x1="85.20" y1="3.12" x2="91.40" y2="3.12" stroke="#7ee42a" stroke-width="1.85" stroke-linecap="butt"/><line x1="91.88" y1="3.60" x2="91.88" y2="9.30" stroke="#7ee42a" stroke-width="1.85" stroke-linecap="butt"/><line x1="91.88" y1="11.10" x2="91.88" y2="16.80" stroke="#7ee42a" stroke-width="1.85" stroke-linecap="butt"/><line x1="85.20" y1="17.27" x2="91.40" y2="17.27" stroke="#7ee42a" stroke-width="1.85" stroke-linecap="butt"/><line x1="84.72" y1="11.10" x2="84.72" y2="16.80" stroke="#7ee42a" stroke-width="1.85" stroke-linecap="butt"/><line x1="84.72" y1="3.60" x2="84.72" y2="9.30" stroke="#7ee42a" stroke-width="1.85" stroke-linecap="butt"/><line x1="85.20" y1="10.20" x2="91.40" y2="10.20" stroke="#7ee42a" stroke-width="1.85" stroke-linecap="butt"/><line x1="96.55" y1="3.12" x2="102.75" y2="3.12" stroke="#7ee42a" stroke-width="1.85" stroke-linecap="butt"/><line x1="103.23" y1="3.60" x2="103.23" y2="9.30" stroke="#7ee42a" stroke-width="1.85" stroke-linecap="butt"/><line x1="96.55" y1="10.20" x2="102.75" y2="10.20" stroke="#7ee42a" stroke-width="1.85" stroke-linecap="butt"/><line x1="96.08" y1="11.10" x2="96.08" y2="16.80" stroke="#7ee42a" stroke-width="1.85" stroke-linecap="butt"/><line x1="96.55" y1="17.27" x2="102.75" y2="17.27" stroke="#7ee42a" stroke-width="1.85" stroke-linecap="butt"/><line x1="107.90" y1="3.12" x2="114.10" y2="3.12" stroke="#7ee42a" stroke-width="1.85" stroke-linecap="butt"/><line x1="114.58" y1="3.60" x2="114.58" y2="9.30" stroke="#7ee42a" stroke-width="1.85" stroke-linecap="butt"/><line x1="114.58" y1="11.10" x2="114.58" y2="16.80" stroke="#7ee42a" stroke-width="1.85" stroke-linecap="butt"/><line x1="107.90" y1="17.27" x2="114.10" y2="17.27" stroke="#7ee42a" stroke-width="1.85" stroke-linecap="butt"/><line x1="107.42" y1="11.10" x2="107.42" y2="16.80" stroke="#7ee42a" stroke-width="1.85" stroke-linecap="butt"/><line x1="107.42" y1="3.60" x2="107.42" y2="9.30" stroke="#7ee42a" stroke-width="1.85" stroke-linecap="butt"/><rect x="59.35" y="14.50" width="1.6" height="1.6" fill="#7ae42c"/></svg><div style="position:absolute;left:282.6px;top:293px;width:51.3px;height:15.5px;background:linear-gradient(#64baf6,#48a2ec 50%,#3a92e0);border-radius:1px;box-shadow:0 0 0 0.5px rgba(255,255,255,0.25)"></div><svg style="position:absolute;left:401px;top:292.7px" width="119" height="21" viewBox="0 0 119 21"><rect x="0" y="0" width="119" height="21" fill="#a8a8a8"/><rect x="0.5" y="0.5" width="118.5" height="20.5" fill="#e0e0d8"/><rect x="1" y="1" width="117" height="19" fill="#000"/><path d="M5.5 6.5 H10.5 M8 4 V9" stroke="#7ae42c" stroke-width="1.5"/><line x1="62.50" y1="3.12" x2="68.70" y2="3.12" stroke="#7ee42a" stroke-width="1.85" stroke-linecap="butt"/><line x1="69.17" y1="3.60" x2="69.17" y2="9.30" stroke="#7ee42a" stroke-width="1.85" stroke-linecap="butt"/><line x1="62.50" y1="10.20" x2="68.70" y2="10.20" stroke="#7ee42a" stroke-width="1.85" stroke-linecap="butt"/><line x1="62.02" y1="11.10" x2="62.02" y2="16.80" stroke="#7ee42a" stroke-width="1.85" stroke-linecap="butt"/><line x1="62.50" y1="17.27" x2="68.70" y2="17.27" stroke="#7ee42a" stroke-width="1.85" stroke-linecap="butt"/><line x1="73.85" y1="3.12" x2="80.05" y2="3.12" stroke="#7ee42a" stroke-width="1.85" stroke-linecap="butt"/><line x1="73.38" y1="3.60" x2="73.38" y2="9.30" stroke="#7ee42a" stroke-width="1.85" stroke-linecap="butt"/><line x1="73.85" y1="10.20" x2="80.05" y2="10.20" stroke="#7ee42a" stroke-width="1.85" stroke-linecap="butt"/><line x1="73.38" y1="11.10" x2="73.38" y2="16.80" stroke="#7ee42a" stroke-width="1.85" stroke-linecap="butt"/><line x1="73.85" y1="17.27" x2="80.05" y2="17.27" stroke="#7ee42a" stroke-width="1.85" stroke-linecap="butt"/><line x1="80.53" y1="11.10" x2="80.53" y2="16.80" stroke="#7ee42a" stroke-width="1.85" stroke-linecap="butt"/><line x1="85.20" y1="3.12" x2="91.40" y2="3.12" stroke="#7ee42a" stroke-width="1.85" stroke-linecap="butt"/><line x1="84.72" y1="3.60" x2="84.72" y2="9.30" stroke="#7ee42a" stroke-width="1.85" stroke-linecap="butt"/><line x1="85.20" y1="10.20" x2="91.40" y2="10.20" stroke="#7ee42a" stroke-width="1.85" stroke-linecap="butt"/><line x1="91.88" y1="11.10" x2="91.88" y2="16.80" stroke="#7ee42a" stroke-width="1.85" stroke-linecap="butt"/><line x1="85.20" y1="17.27" x2="91.40" y2="17.27" stroke="#7ee42a" stroke-width="1.85" stroke-linecap="butt"/><line x1="96.55" y1="3.12" x2="102.75" y2="3.12" stroke="#7ee42a" stroke-width="1.85" stroke-linecap="butt"/><line x1="103.23" y1="3.60" x2="103.23" y2="9.30" stroke="#7ee42a" stroke-width="1.85" stroke-linecap="butt"/><line x1="103.23" y1="11.10" x2="103.23" y2="16.80" stroke="#7ee42a" stroke-width="1.85" stroke-linecap="butt"/><line x1="96.08" y1="3.60" x2="96.08" y2="9.30" stroke="#7ee42a" stroke-width="1.85" stroke-linecap="butt"/><line x1="96.55" y1="10.20" x2="102.75" y2="10.20" stroke="#7ee42a" stroke-width="1.85" stroke-linecap="butt"/><line x1="107.90" y1="3.12" x2="114.10" y2="3.12" stroke="#7ee42a" stroke-width="1.85" stroke-linecap="butt"/><line x1="107.42" y1="3.60" x2="107.42" y2="9.30" stroke="#7ee42a" stroke-width="1.85" stroke-linecap="butt"/><line x1="107.90" y1="10.20" x2="114.10" y2="10.20" stroke="#7ee42a" stroke-width="1.85" stroke-linecap="butt"/><line x1="107.42" y1="11.10" x2="107.42" y2="16.80" stroke="#7ee42a" stroke-width="1.85" stroke-linecap="butt"/><line x1="107.90" y1="17.27" x2="114.10" y2="17.27" stroke="#7ee42a" stroke-width="1.85" stroke-linecap="butt"/><line x1="114.58" y1="11.10" x2="114.58" y2="16.80" stroke="#7ee42a" stroke-width="1.85" stroke-linecap="butt"/><rect x="70.70" y="14.50" width="1.6" height="1.6" fill="#7ae42c"/></svg><div style="position:absolute;left:282.6px;top:328px;width:51.3px;height:15.5px;background:linear-gradient(#64baf6,#48a2ec 50%,#3a92e0);border-radius:1px;box-shadow:0 0 0 0.5px rgba(255,255,255,0.25)"></div><svg style="position:absolute;left:401px;top:327.7px" width="119" height="21" viewBox="0 0 119 21"><rect x="0" y="0" width="119" height="21" fill="#a8a8a8"/><rect x="0.5" y="0.5" width="118.5" height="20.5" fill="#e0e0d8"/><rect x="1" y="1" width="117" height="19" fill="#000"/><path d="M5.5 6.5 H10.5 M8 4 V9" stroke="#7ae42c" stroke-width="1.5"/><line x1="62.50" y1="3.12" x2="68.70" y2="3.12" stroke="#7ee42a" stroke-width="1.85" stroke-linecap="butt"/><line x1="69.17" y1="3.60" x2="69.17" y2="9.30" stroke="#7ee42a" stroke-width="1.85" stroke-linecap="butt"/><line x1="62.50" y1="10.20" x2="68.70" y2="10.20" stroke="#7ee42a" stroke-width="1.85" stroke-linecap="butt"/><line x1="69.17" y1="11.10" x2="69.17" y2="16.80" stroke="#7ee42a" stroke-width="1.85" stroke-linecap="butt"/><line x1="62.50" y1="17.27" x2="68.70" y2="17.27" stroke="#7ee42a" stroke-width="1.85" stroke-linecap="butt"/><line x1="73.85" y1="3.12" x2="80.05" y2="3.12" stroke="#7ee42a" stroke-width="1.85" stroke-linecap="butt"/><line x1="80.53" y1="3.60" x2="80.53" y2="9.30" stroke="#7ee42a" stroke-width="1.85" stroke-linecap="butt"/><line x1="73.85" y1="10.20" x2="80.05" y2="10.20" stroke="#7ee42a" stroke-width="1.85" stroke-linecap="butt"/><line x1="80.53" y1="11.10" x2="80.53" y2="16.80" stroke="#7ee42a" stroke-width="1.85" stroke-linecap="butt"/><line x1="73.85" y1="17.27" x2="80.05" y2="17.27" stroke="#7ee42a" stroke-width="1.85" stroke-linecap="butt"/><line x1="85.20" y1="3.12" x2="91.40" y2="3.12" stroke="#7ee42a" stroke-width="1.85" stroke-linecap="butt"/><line x1="91.88" y1="3.60" x2="91.88" y2="9.30" stroke="#7ee42a" stroke-width="1.85" stroke-linecap="butt"/><line x1="91.88" y1="11.10" x2="91.88" y2="16.80" stroke="#7ee42a" stroke-width="1.85" stroke-linecap="butt"/><line x1="85.20" y1="17.27" x2="91.40" y2="17.27" stroke="#7ee42a" stroke-width="1.85" stroke-linecap="butt"/><line x1="84.72" y1="11.10" x2="84.72" y2="16.80" stroke="#7ee42a" stroke-width="1.85" stroke-linecap="butt"/><line x1="84.72" y1="3.60" x2="84.72" y2="9.30" stroke="#7ee42a" stroke-width="1.85" stroke-linecap="butt"/><line x1="85.20" y1="10.20" x2="91.40" y2="10.20" stroke="#7ee42a" stroke-width="1.85" stroke-linecap="butt"/><line x1="96.55" y1="3.12" x2="102.75" y2="3.12" stroke="#7ee42a" stroke-width="1.85" stroke-linecap="butt"/><line x1="96.08" y1="3.60" x2="96.08" y2="9.30" stroke="#7ee42a" stroke-width="1.85" stroke-linecap="butt"/><line x1="96.55" y1="10.20" x2="102.75" y2="10.20" stroke="#7ee42a" stroke-width="1.85" stroke-linecap="butt"/><line x1="103.23" y1="11.10" x2="103.23" y2="16.80" stroke="#7ee42a" stroke-width="1.85" stroke-linecap="butt"/><line x1="96.55" y1="17.27" x2="102.75" y2="17.27" stroke="#7ee42a" stroke-width="1.85" stroke-linecap="butt"/><line x1="107.90" y1="3.12" x2="114.10" y2="3.12" stroke="#7ee42a" stroke-width="1.85" stroke-linecap="butt"/><line x1="114.58" y1="3.60" x2="114.58" y2="9.30" stroke="#7ee42a" stroke-width="1.85" stroke-linecap="butt"/><line x1="107.90" y1="10.20" x2="114.10" y2="10.20" stroke="#7ee42a" stroke-width="1.85" stroke-linecap="butt"/><line x1="107.42" y1="11.10" x2="107.42" y2="16.80" stroke="#7ee42a" stroke-width="1.85" stroke-linecap="butt"/><line x1="107.90" y1="17.27" x2="114.10" y2="17.27" stroke="#7ee42a" stroke-width="1.85" stroke-linecap="butt"/><rect x="70.70" y="14.50" width="1.6" height="1.6" fill="#7ae42c"/></svg><div style="position:absolute;left:25.5px;top:369px;width:18.7px;height:41px;box-sizing:border-box;border-radius:5px;background:linear-gradient(90deg,#358ae0,#4898e8 50%,#358ae0);border:1px solid #2a78d0;box-shadow:inset 0 0 0 0.6px #6ab0f0"></div><div style="position:absolute;left:29.8px;top:371.6px;width:10.5px;height:34.5px;border-radius:5px;background:linear-gradient(90deg,#cfe6fa,#f6fbff 50%,#cfe6fa)"></div><div style="position:absolute;left:29.8px;top:371.6px;width:10.5px;height:17.5px;border-radius:5px 5px 3px 3px;background:linear-gradient(#8ccaf4 0%,#4a98e4 22%,#2a6cc4 50%,#2a6cc8 72%,#6ab0ee 92%,#a8d4f8 100%)"></div><div style="position:absolute;left:25.5px;top:415.5px;width:18.7px;height:41px;box-sizing:border-box;border-radius:5px;background:linear-gradient(90deg,#358ae0,#4898e8 50%,#358ae0);border:1px solid #2a78d0;box-shadow:inset 0 0 0 0.6px #6ab0f0"></div><div style="position:absolute;left:29.8px;top:418.1px;width:10.5px;height:34.5px;border-radius:5px;background:linear-gradient(90deg,#cfe6fa,#f6fbff 50%,#cfe6fa)"></div><div style="position:absolute;left:29.8px;top:418.1px;width:10.5px;height:17.5px;border-radius:5px 5px 3px 3px;background:linear-gradient(#8ccaf4 0%,#4a98e4 22%,#2a6cc4 50%,#2a6cc8 72%,#6ab0ee 92%,#a8d4f8 100%)"></div><div style="position:absolute;left:130px;top:369px;width:18.7px;height:41px;box-sizing:border-box;border-radius:5px;background:linear-gradient(90deg,#358ae0,#4898e8 50%,#358ae0);border:1px solid #2a78d0;box-shadow:inset 0 0 0 0.6px #6ab0f0"></div><div style="position:absolute;left:134.3px;top:371.6px;width:10.5px;height:34.5px;border-radius:5px;background:linear-gradient(90deg,#cfe6fa,#f6fbff 50%,#cfe6fa)"></div><div style="position:absolute;left:134.3px;top:371.6px;width:10.5px;height:17.5px;border-radius:5px 5px 3px 3px;background:linear-gradient(#8ccaf4 0%,#4a98e4 22%,#2a6cc4 50%,#2a6cc8 72%,#6ab0ee 92%,#a8d4f8 100%)"></div><div style="position:absolute;left:130px;top:415.5px;width:18.7px;height:41px;box-sizing:border-box;border-radius:5px;background:linear-gradient(90deg,#358ae0,#4898e8 50%,#358ae0);border:1px solid #2a78d0;box-shadow:inset 0 0 0 0.6px #6ab0f0"></div><div style="position:absolute;left:134.3px;top:418.1px;width:10.5px;height:34.5px;border-radius:5px;background:linear-gradient(90deg,#cfe6fa,#f6fbff 50%,#cfe6fa)"></div><div style="position:absolute;left:134.3px;top:434.0px;width:10.5px;height:18.6px;border-radius:3px 3px 5px 5px;background:linear-gradient(#c4e2fa 0%,#7cbcf0 12%,#4a98e4 30%,#2a6cc4 58%,#2a6cc8 78%,#5aa4ea 100%)"></div><div style="position:absolute;left:236px;top:369px;width:18.7px;height:41px;box-sizing:border-box;border-radius:5px;background:linear-gradient(90deg,#358ae0,#4898e8 50%,#358ae0);border:1px solid #2a78d0;box-shadow:inset 0 0 0 0.6px #6ab0f0"></div><div style="position:absolute;left:240.3px;top:371.6px;width:10.5px;height:34.5px;border-radius:5px;background:linear-gradient(90deg,#cfe6fa,#f6fbff 50%,#cfe6fa)"></div><div style="position:absolute;left:240.3px;top:387.5px;width:10.5px;height:18.6px;border-radius:3px 3px 5px 5px;background:linear-gradient(#c4e2fa 0%,#7cbcf0 12%,#4a98e4 30%,#2a6cc4 58%,#2a6cc8 78%,#5aa4ea 100%)"></div><div style="position:absolute;left:328.8px;top:373.2px;width:18.2px;height:9.5px;box-sizing:border-box;background:#005000;border:1px solid;border-color:#6a7a6a #d8d8c8 #d8d8c8 #6a7a6a"></div><div style="position:absolute;left:328.8px;top:390.9px;width:18.2px;height:9.5px;box-sizing:border-box;background:#005000;border:1px solid;border-color:#6a7a6a #d8d8c8 #d8d8c8 #6a7a6a"></div><div style="position:absolute;left:328.8px;top:408.6px;width:18.2px;height:9.5px;box-sizing:border-box;background:#005000;border:1px solid;border-color:#6a7a6a #d8d8c8 #d8d8c8 #6a7a6a"></div><div style="position:absolute;left:328.8px;top:426.2px;width:18.2px;height:9.5px;box-sizing:border-box;background:#005000;border:1px solid;border-color:#6a7a6a #d8d8c8 #d8d8c8 #6a7a6a"></div><div style="position:absolute;left:328.8px;top:443.8px;width:18.2px;height:9.5px;box-sizing:border-box;background:#005000;border:1px solid;border-color:#6a7a6a #d8d8c8 #d8d8c8 #6a7a6a"></div><div style="position:absolute;left:392.3px;top:373.2px;width:18.2px;height:9.5px;box-sizing:border-box;background:#00f400;border:1px solid;border-color:#6a7a6a #d8d8c8 #d8d8c8 #6a7a6a"></div><div style="position:absolute;left:392.3px;top:390.9px;width:18.2px;height:9.5px;box-sizing:border-box;background:#005000;border:1px solid;border-color:#6a7a6a #d8d8c8 #d8d8c8 #6a7a6a"></div><div style="position:absolute;left:392.3px;top:408.6px;width:18.2px;height:9.5px;box-sizing:border-box;background:#005000;border:1px solid;border-color:#6a7a6a #d8d8c8 #d8d8c8 #6a7a6a"></div><div style="position:absolute;left:392.3px;top:426.2px;width:18.2px;height:9.5px;box-sizing:border-box;background:#005000;border:1px solid;border-color:#6a7a6a #d8d8c8 #d8d8c8 #6a7a6a"></div><div style="position:absolute;left:392.3px;top:443.8px;width:18.2px;height:9.5px;box-sizing:border-box;background:#00f400;border:1px solid;border-color:#6a7a6a #d8d8c8 #d8d8c8 #6a7a6a"></div><div style="position:absolute;left:456px;top:373.2px;width:18.2px;height:9.5px;box-sizing:border-box;background:#005000;border:1px solid;border-color:#6a7a6a #d8d8c8 #d8d8c8 #6a7a6a"></div><div style="position:absolute;left:456px;top:390.9px;width:18.2px;height:9.5px;box-sizing:border-box;background:#005000;border:1px solid;border-color:#6a7a6a #d8d8c8 #d8d8c8 #6a7a6a"></div><div style="position:absolute;left:456px;top:408.6px;width:18.2px;height:9.5px;box-sizing:border-box;background:#005000;border:1px solid;border-color:#6a7a6a #d8d8c8 #d8d8c8 #6a7a6a"></div><div style="position:absolute;left:456px;top:426.2px;width:18.2px;height:9.5px;box-sizing:border-box;background:#005000;border:1px solid;border-color:#6a7a6a #d8d8c8 #d8d8c8 #6a7a6a"></div><div style="position:absolute;left:456px;top:443.8px;width:18.2px;height:9.5px;box-sizing:border-box;background:#00f400;border:1px solid;border-color:#6a7a6a #d8d8c8 #d8d8c8 #6a7a6a"></div><svg style="position:absolute;left:0;top:460px" width="22" height="22" viewBox="0 0 22 22"><rect x="8.1" y="10.6" width="1.4" height="1.4" fill="#5a9ee0"/><rect x="8.1" y="13.1" width="1.4" height="1.4" fill="#5a9ee0"/><rect x="10.6" y="13.1" width="1.4" height="1.4" fill="#5a9ee0"/><rect x="8.1" y="15.6" width="1.4" height="1.4" fill="#5a9ee0"/><rect x="10.6" y="15.6" width="1.4" height="1.4" fill="#5a9ee0"/><rect x="13.1" y="15.6" width="1.4" height="1.4" fill="#5a9ee0"/><rect x="8.1" y="18.1" width="1.4" height="1.4" fill="#5a9ee0"/><rect x="10.6" y="18.1" width="1.4" height="1.4" fill="#5a9ee0"/><rect x="13.1" y="18.1" width="1.4" height="1.4" fill="#5a9ee0"/><rect x="15.6" y="18.1" width="1.4" height="1.4" fill="#5a9ee0"/></svg><div style="position:absolute;left:220px;top:466px;width:1px;height:17px;background:#6a6e78"></div><div style="position:absolute;left:343px;top:466px;width:1px;height:17px;background:#6a6e78"></div><div style="position:absolute;left:484.5px;top:466px;width:1px;height:17px;background:#6a6e78"></div><svg style="position:absolute;left:540px;top:49px" width="257" height="30" viewBox="0 0 257 30"><defs><linearGradient id="tq" gradientUnits="userSpaceOnUse" x1="0" y1="5" x2="0" y2="23.5"><stop offset="0" stop-color="#42a0ea"/><stop offset="0.46" stop-color="#3290e0"/><stop offset="0.5" stop-color="#1a72c8"/><stop offset="1" stop-color="#1a72c8"/></linearGradient><linearGradient id="tg" gradientUnits="userSpaceOnUse" x1="0" y1="5" x2="0" y2="23.5"><stop offset="0" stop-color="#94dc20"/><stop offset="0.52" stop-color="#76c816"/><stop offset="0.56" stop-color="#56ac12"/><stop offset="1" stop-color="#4a9c10"/></linearGradient></defs><path d="M126 23.5 L127 13 Q127.5 9 132 9 L189 9 Q191.5 9 193 12 L200 23.5 Z" fill="url(#tg)"/><path d="M76 23.5 L77 12 Q77.5 8 82 8 L122 8 Q124 8 125 11 L129 23.5 Z" fill="url(#tg)"/><path d="M6 23.5 L6 10 Q6 5 11 5 L72 5 Q74.5 5 75.5 8 L79 23.5 Z" fill="url(#tq)"/></svg><div style="position:absolute;left:545.5px;top:72.5px;width:247px;height:389px;background:#0a76ca;box-shadow:inset 0 1px 0 #48a4ec, inset 1px 0 0 #58aaee, inset -1px 0 0 #3a96e4, inset 0 -1px 0 #3a96e4"></div><div style="position:absolute;left:552.2px;top:80.5px;width:234.5px;height:93.5px;background:#70bcef;border-radius:6px"></div><div style="position:absolute;left:552.2px;top:180.3px;width:234.5px;height:147px;background:#70bcef;border-radius:6px"></div><div style="position:absolute;left:552.2px;top:333.8px;width:234.5px;height:120px;background:#70bcef;border-radius:6px"></div><div style="position:absolute;left:561.9px;top:96.6px;width:103.5px;height:15.8px;box-sizing:border-box;background:linear-gradient(#fcfcfa,#eeeeea 50%,#e2e2dc);border:1px solid #a8a8a0;border-radius:2px"></div><div style="position:absolute;left:673.6px;top:96.6px;width:103.3px;height:15.8px;box-sizing:border-box;background:linear-gradient(#fcfcfa,#eeeeea 50%,#e2e2dc);border:1px solid #a8a8a0;border-radius:2px"></div><div style="position:absolute;left:561.9px;top:115.5px;width:103.5px;height:15.8px;box-sizing:border-box;background:linear-gradient(#fcfcfa,#eeeeea 50%,#e2e2dc);border:1px solid #a8a8a0;border-radius:2px"></div><div style="position:absolute;left:673.6px;top:115.5px;width:103.3px;height:15.8px;box-sizing:border-box;background:linear-gradient(#fcfcfa,#eeeeea 50%,#e2e2dc);border:1px solid #a8a8a0;border-radius:2px"></div><div style="position:absolute;left:561.9px;top:134.7px;width:103.5px;height:15.8px;box-sizing:border-box;background:linear-gradient(#fcfcfa,#eeeeea 50%,#e2e2dc);border:1px solid #a8a8a0;border-radius:2px"></div><div style="position:absolute;left:673.6px;top:134.7px;width:103.3px;height:15.8px;box-sizing:border-box;background:linear-gradient(#fcfcfa,#eeeeea 50%,#e2e2dc);border:1px solid #a8a8a0;border-radius:2px"></div><div style="position:absolute;left:561.9px;top:152.8px;width:103.5px;height:15.8px;box-sizing:border-box;background:linear-gradient(#fcfcfa,#eeeeea 50%,#e2e2dc);border:1px solid #a8a8a0;border-radius:2px"></div><div style="position:absolute;left:673.6px;top:152.8px;width:103.3px;height:15.8px;box-sizing:border-box;background:linear-gradient(#fcfcfa,#eeeeea 50%,#e2e2dc);border:1px solid #a8a8a0;border-radius:2px"></div><div style="position:absolute;left:562px;top:210.1px;width:214px;height:15.1px;box-sizing:border-box;background:linear-gradient(#fcfcfa,#eeeeea 50%,#e2e2dc);border:1px solid #a8a8a0;border-radius:2px"></div><div style="position:absolute;left:562px;top:228.2px;width:214px;height:15.1px;box-sizing:border-box;background:linear-gradient(#fcfcfa,#eeeeea 50%,#e2e2dc);border:1px solid #a8a8a0;border-radius:2px"></div><div style="position:absolute;left:562px;top:246.1px;width:214px;height:15.1px;box-sizing:border-box;background:linear-gradient(#fcfcfa,#eeeeea 50%,#e2e2dc);border:1px solid #a8a8a0;border-radius:2px"></div><div style="position:absolute;left:562.3px;top:266.8px;width:105px;height:53.7px;background:#b2dcf6;border-radius:3px"></div><div style="position:absolute;left:583.7px;top:282.2px;width:6.6px;height:6.6px;box-sizing:border-box;border-radius:50%;border:0.7px solid #6a7078;background:radial-gradient(#ffffff,#e8ecf0)"></div><div style="position:absolute;left:585.7px;top:284.2px;width:2.6px;height:2.6px;border-radius:50%;background:#40b030"></div><div style="position:absolute;left:583.7px;top:294.59999999999997px;width:6.6px;height:6.6px;box-sizing:border-box;border-radius:50%;border:0.7px solid #6a7078;background:radial-gradient(#ffffff,#e8ecf0)"></div><div style="position:absolute;left:583.7px;top:307.59999999999997px;width:6.6px;height:6.6px;box-sizing:border-box;border-radius:50%;border:0.7px solid #6a7078;background:radial-gradient(#ffffff,#e8ecf0)"></div><div style="position:absolute;left:691.9px;top:274.6px;width:84px;height:15.4px;background:#f4f0e8"></div><div style="position:absolute;left:643.1px;top:338.6px;width:53px;height:11.5px;box-sizing:border-box;background:linear-gradient(#fcfcfa,#eeeeea 50%,#e2e2dc);border:1px solid #a8a8a0;border-radius:2px"></div><div style="position:absolute;left:577.3px;top:351.6px;width:89.5px;height:14.4px;background:linear-gradient(#f6f6f6,#e4e4e4 50%,#cacaca)"></div><div style="position:absolute;left:673.3px;top:351.6px;width:80.5px;height:14.4px;box-sizing:border-box;background:#fff;border-top:1.5px solid #9a9a9a;border-left:1.5px solid #9a9a9a"></div><div style="position:absolute;left:577.3px;top:369.7px;width:89.5px;height:14.4px;background:linear-gradient(#f6f6f6,#e4e4e4 50%,#cacaca)"></div><div style="position:absolute;left:673.3px;top:369.7px;width:80.5px;height:14.4px;box-sizing:border-box;background:#fff;border-top:1.5px solid #9a9a9a;border-left:1.5px solid #9a9a9a"></div><div style="position:absolute;left:577.3px;top:388px;width:89.5px;height:14.4px;background:linear-gradient(#f6f6f6,#e4e4e4 50%,#cacaca)"></div><div style="position:absolute;left:673.3px;top:388px;width:80.5px;height:14.4px;box-sizing:border-box;background:#fff;border-top:1.5px solid #9a9a9a;border-left:1.5px solid #9a9a9a"></div><div style="position:absolute;left:577.3px;top:406.1px;width:89.5px;height:14.4px;background:linear-gradient(#f6f6f6,#e4e4e4 50%,#cacaca)"></div><div style="position:absolute;left:673.3px;top:406.1px;width:80.5px;height:14.4px;box-sizing:border-box;background:#fff;border-top:1.5px solid #9a9a9a;border-left:1.5px solid #9a9a9a"></div><div style="position:absolute;left:586.5px;top:429.3px;width:66.8px;height:16.8px;box-sizing:border-box;background:linear-gradient(#fcfcfa,#eeeeea 50%,#e0e0da);border:1px solid #707070;border-radius:2px"></div><div style="position:absolute;left:682.8px;top:429.3px;width:66.8px;height:16.8px;background:#f4f0e8"></div><div style="position:absolute;left:0;top:0;width:800px;height:486px;will-change:transform"><span id="t0" style="position:absolute;left:11.67px;top:3.21px;transform:scaleX(0.9238);transform-origin:0 0;white-space:nowrap;font-family:'Liberation Sans',sans-serif;font-size:7.2px;font-weight:bold;color:#f4f4f4;line-height:1;letter-spacing:-0.223px;text-shadow:0.3px 0 0 #f4f4f4;">AKTAKOM Electronic Load Pro</span><span id="t1" style="position:absolute;left:51.49px;top:27.23px;transform:scaleX(0.9581);transform-origin:0 0;white-space:nowrap;font-family:'Liberation Sans',sans-serif;font-size:10.6px;font-weight:normal;color:#f2f8ff;line-height:1;letter-spacing:-0.172px;">Config</span><span id="t2" style="position:absolute;left:165.47px;top:27.23px;transform:scaleX(0.9907);transform-origin:0 0;white-space:nowrap;font-family:'Liberation Sans',sans-serif;font-size:10.6px;font-weight:normal;color:#f2f8ff;line-height:1;letter-spacing:-0.034px;">Battery</span><span id="t3" style="position:absolute;left:276.10px;top:27.23px;transform:scaleX(0.9455);transform-origin:0 0;white-space:nowrap;font-family:'Liberation Sans',sans-serif;font-size:10.6px;font-weight:normal;color:#f2f8ff;line-height:1;letter-spacing:-0.296px;">Save</span><span id="t4" style="position:absolute;left:386.30px;top:27.23px;transform:scaleX(0.9454);transform-origin:0 0;white-space:nowrap;font-family:'Liberation Sans',sans-serif;font-size:10.6px;font-weight:normal;color:#f2f8ff;line-height:1;letter-spacing:-0.319px;">Open</span><span id="t5" style="position:absolute;left:497.97px;top:27.23px;white-space:nowrap;font-family:'Liberation Sans',sans-serif;font-size:10.6px;font-weight:normal;color:#f2f8ff;line-height:1;letter-spacing:0.188px;">Help</span><span id="t6" style="position:absolute;left:124.50px;top:58.50px;transform:scaleX(0.9275);transform-origin:0 0;white-space:nowrap;font-family:'Liberation Sans',sans-serif;font-size:6.5px;font-weight:bold;color:#fff;line-height:1;letter-spacing:-0.184px;text-shadow:0.3px 0 0 #fff;">Current(A)</span><span id="t7" style="position:absolute;left:17.31px;top:61.72px;transform:scaleX(0.9628);transform-origin:0 0;white-space:nowrap;font-family:'Liberation Sans',sans-serif;font-size:6px;font-weight:normal;color:#dae4f2;line-height:1;letter-spacing:-0.095px;">6,00</span><span id="t8" style="position:absolute;left:17.31px;top:94.72px;transform:scaleX(0.9628);transform-origin:0 0;white-space:nowrap;font-family:'Liberation Sans',sans-serif;font-size:6px;font-weight:normal;color:#dae4f2;line-height:1;letter-spacing:-0.095px;">4,00</span><span id="t9" style="position:absolute;left:17.31px;top:127.72px;transform:scaleX(0.9628);transform-origin:0 0;white-space:nowrap;font-family:'Liberation Sans',sans-serif;font-size:6px;font-weight:normal;color:#dae4f2;line-height:1;letter-spacing:-0.095px;">2,00</span><span id="t10" style="position:absolute;left:17.31px;top:160.72px;transform:scaleX(0.9628);transform-origin:0 0;white-space:nowrap;font-family:'Liberation Sans',sans-serif;font-size:6px;font-weight:normal;color:#dae4f2;line-height:1;letter-spacing:-0.095px;">0,00</span><span id="t11" style="position:absolute;left:32.83px;top:186.12px;white-space:nowrap;font-family:'Liberation Sans',sans-serif;font-size:6px;font-weight:normal;color:#dae4f2;line-height:1;letter-spacing:0.000px;">0</span><span id="t12" style="position:absolute;left:75.82px;top:186.12px;white-space:nowrap;font-family:'Liberation Sans',sans-serif;font-size:6px;font-weight:normal;color:#dae4f2;line-height:1;letter-spacing:0.000px;">20</span><span id="t13" style="position:absolute;left:120.48px;top:186.12px;white-space:nowrap;font-family:'Liberation Sans',sans-serif;font-size:6px;font-weight:normal;color:#dae4f2;line-height:1;letter-spacing:0.000px;">40</span><span id="t14" style="position:absolute;left:165.14px;top:186.12px;white-space:nowrap;font-family:'Liberation Sans',sans-serif;font-size:6px;font-weight:normal;color:#dae4f2;line-height:1;letter-spacing:0.000px;">60</span><span id="t15" style="position:absolute;left:209.80px;top:186.12px;white-space:nowrap;font-family:'Liberation Sans',sans-serif;font-size:6px;font-weight:normal;color:#dae4f2;line-height:1;letter-spacing:0.000px;">80</span><span id="t16" style="position:absolute;left:252.79px;top:186.12px;white-space:nowrap;font-family:'Liberation Sans',sans-serif;font-size:6px;font-weight:normal;color:#dae4f2;line-height:1;letter-spacing:0.000px;">100</span><span id="t17" style="position:absolute;left:135.25px;top:194.70px;transform:scaleX(0.9332);transform-origin:0 0;white-space:nowrap;font-family:'Liberation Sans',sans-serif;font-size:6.5px;font-weight:bold;color:#fff;line-height:1;letter-spacing:-0.184px;text-shadow:0.3px 0 0 #fff;">Time(S)</span><span id="t18" style="position:absolute;left:102.70px;top:212.10px;transform:scaleX(0.9264);transform-origin:0 0;white-space:nowrap;font-family:'Liberation Sans',sans-serif;font-size:6.5px;font-weight:bold;color:#fff;line-height:1;letter-spacing:-0.184px;text-shadow:0.3px 0 0 #fff;">Voltage/Resistance/Power</span><span id="t19" style="position:absolute;left:248.71px;top:222.22px;transform:scaleX(0.9682);transform-origin:0 0;white-space:nowrap;font-family:'Liberation Sans',sans-serif;font-size:6px;font-weight:normal;color:#dae4f2;line-height:1;letter-spacing:-0.061px;">Volt.</span><span id="t20" style="position:absolute;left:248.73px;top:229.72px;transform:scaleX(0.8854);transform-origin:0 0;white-space:nowrap;font-family:'Liberation Sans',sans-serif;font-size:6px;font-weight:normal;color:#dae4f2;line-height:1;letter-spacing:-0.338px;">Res.</span><span id="t21" style="position:absolute;left:248.71px;top:237.22px;transform:scaleX(0.9665);transform-origin:0 0;white-space:nowrap;font-family:'Liberation Sans',sans-serif;font-size:6px;font-weight:normal;color:#dae4f2;line-height:1;letter-spacing:-0.095px;">Power</span><span id="t22" style="position:absolute;left:17.31px;top:231.22px;transform:scaleX(0.9628);transform-origin:0 0;white-space:nowrap;font-family:'Liberation Sans',sans-serif;font-size:6px;font-weight:normal;color:#dae4f2;line-height:1;letter-spacing:-0.095px;">3,40</span><span id="t23" style="position:absolute;left:17.31px;top:253.22px;transform:scaleX(0.9628);transform-origin:0 0;white-space:nowrap;font-family:'Liberation Sans',sans-serif;font-size:6px;font-weight:normal;color:#dae4f2;line-height:1;letter-spacing:-0.095px;">3,20</span><span id="t24" style="position:absolute;left:17.31px;top:275.22px;transform:scaleX(0.9628);transform-origin:0 0;white-space:nowrap;font-family:'Liberation Sans',sans-serif;font-size:6px;font-weight:normal;color:#dae4f2;line-height:1;letter-spacing:-0.095px;">3,00</span><span id="t25" style="position:absolute;left:17.31px;top:297.22px;transform:scaleX(0.9628);transform-origin:0 0;white-space:nowrap;font-family:'Liberation Sans',sans-serif;font-size:6px;font-weight:normal;color:#dae4f2;line-height:1;letter-spacing:-0.095px;">2,80</span><span id="t26" style="position:absolute;left:17.31px;top:319.22px;transform:scaleX(0.9628);transform-origin:0 0;white-space:nowrap;font-family:'Liberation Sans',sans-serif;font-size:6px;font-weight:normal;color:#dae4f2;line-height:1;letter-spacing:-0.095px;">2,60</span><span id="t27" style="position:absolute;left:45.83px;top:341.22px;white-space:nowrap;font-family:'Liberation Sans',sans-serif;font-size:6px;font-weight:normal;color:#dae4f2;line-height:1;letter-spacing:0.000px;">-5,0</span><span id="t28" style="position:absolute;left:81.33px;top:341.22px;white-space:nowrap;font-family:'Liberation Sans',sans-serif;font-size:6px;font-weight:normal;color:#dae4f2;line-height:1;letter-spacing:0.000px;">0,0</span><span id="t29" style="position:absolute;left:115.83px;top:341.22px;white-space:nowrap;font-family:'Liberation Sans',sans-serif;font-size:6px;font-weight:normal;color:#dae4f2;line-height:1;letter-spacing:0.000px;">5,0</span><span id="t30" style="position:absolute;left:148.66px;top:341.22px;white-space:nowrap;font-family:'Liberation Sans',sans-serif;font-size:6px;font-weight:normal;color:#dae4f2;line-height:1;letter-spacing:0.000px;">10,0</span><span id="t31" style="position:absolute;left:183.16px;top:341.22px;white-space:nowrap;font-family:'Liberation Sans',sans-serif;font-size:6px;font-weight:normal;color:#dae4f2;line-height:1;letter-spacing:0.000px;">15,0</span><span id="t32" style="position:absolute;left:217.66px;top:341.22px;white-space:nowrap;font-family:'Liberation Sans',sans-serif;font-size:6px;font-weight:normal;color:#dae4f2;line-height:1;letter-spacing:0.000px;">20,0</span><span id="t33" style="position:absolute;left:125.95px;top:349.50px;transform:scaleX(0.9332);transform-origin:0 0;white-space:nowrap;font-family:'Liberation Sans',sans-serif;font-size:6.5px;font-weight:bold;color:#fff;line-height:1;letter-spacing:-0.184px;text-shadow:0.3px 0 0 #fff;">Time(S)</span><span id="t34" style="position:absolute;left:296.76px;top:149.99px;white-space:nowrap;font-family:'Liberation Sans',sans-serif;font-size:6px;font-weight:normal;color:#dae4f2;line-height:1;letter-spacing:0.000px;">0,0</span><span id="t35" style="position:absolute;left:285.49px;top:93.32px;white-space:nowrap;font-family:'Liberation Sans',sans-serif;font-size:6px;font-weight:normal;color:#dae4f2;line-height:1;letter-spacing:0.000px;">5,0</span><span id="t36" style="position:absolute;left:331.86px;top:61.22px;white-space:nowrap;font-family:'Liberation Sans',sans-serif;font-size:6px;font-weight:normal;color:#dae4f2;line-height:1;letter-spacing:0.000px;">10,0</span><span id="t37" style="position:absolute;left:379.90px;top:93.32px;white-space:nowrap;font-family:'Liberation Sans',sans-serif;font-size:6px;font-weight:normal;color:#dae4f2;line-height:1;letter-spacing:0.000px;">15,0</span><span id="t38" style="position:absolute;left:368.63px;top:149.99px;white-space:nowrap;font-family:'Liberation Sans',sans-serif;font-size:6px;font-weight:normal;color:#dae4f2;line-height:1;letter-spacing:0.000px;">20,0</span><span id="t39" style="position:absolute;left:325.89px;top:112.80px;transform:scaleX(0.9601);transform-origin:0 0;white-space:nowrap;font-family:'Liberation Sans',sans-serif;font-size:6.5px;font-weight:bold;color:#228a1c;line-height:1;letter-spacing:-0.109px;text-shadow:0.12px 0 0 #228a1c;">3,0000V</span><span id="t40" style="position:absolute;left:280.90px;top:175.62px;transform:scaleX(0.9873);transform-origin:0 0;white-space:nowrap;font-family:'Liberation Sans',sans-serif;font-size:6px;font-weight:normal;color:#dae4f2;line-height:1;letter-spacing:-0.026px;">Use Mouse wheel , Arrow or Page Up/Down</span><span id="t41" style="position:absolute;left:280.91px;top:182.92px;transform:scaleX(0.9771);transform-origin:0 0;white-space:nowrap;font-family:'Liberation Sans',sans-serif;font-size:6px;font-weight:normal;color:#dae4f2;line-height:1;letter-spacing:-0.043px;">key to change the setting value</span><span id="t42" style="position:absolute;left:400.71px;top:67.82px;transform:scaleX(0.9752);transform-origin:0 0;white-space:nowrap;font-family:'Liberation Sans',sans-serif;font-size:6px;font-weight:normal;color:#dae4f2;line-height:1;letter-spacing:-0.050px;">Actual Value</span><span id="t43" style="position:absolute;left:400.70px;top:102.22px;transform:scaleX(0.9887);transform-origin:0 0;white-space:nowrap;font-family:'Liberation Sans',sans-serif;font-size:6px;font-weight:normal;color:#dae4f2;line-height:1;letter-spacing:-0.022px;">Setting Value</span><span id="t44" style="position:absolute;left:522.40px;top:82.41px;white-space:nowrap;font-family:'Liberation Sans',sans-serif;font-size:6.6px;font-weight:bold;color:#dae4f2;line-height:1;letter-spacing:0.000px;text-shadow:0.3px 0 0 #dae4f2;">V</span><span id="t45" style="position:absolute;left:522.40px;top:116.71px;white-space:nowrap;font-family:'Liberation Sans',sans-serif;font-size:6.6px;font-weight:bold;color:#dae4f2;line-height:1;letter-spacing:0.000px;text-shadow:0.3px 0 0 #dae4f2;">V</span><span id="t46" style="position:absolute;left:523.66px;top:151.07px;white-space:nowrap;font-family:'Liberation Sans',sans-serif;font-size:7px;font-weight:bold;color:#f0f6ff;line-height:1;letter-spacing:0.000px;text-shadow:0.3px 0 0 #f0f6ff;">V</span><span id="t47" style="position:absolute;left:409.61px;top:168.14px;white-space:nowrap;font-family:'Liberation Sans',sans-serif;font-size:6.8px;font-weight:bold;color:#1a1a1a;line-height:1;letter-spacing:0.000px;text-shadow:0.12px 0 0 #1a1a1a;">1</span><span id="t48" style="position:absolute;left:431.31px;top:168.14px;white-space:nowrap;font-family:'Liberation Sans',sans-serif;font-size:6.8px;font-weight:bold;color:#1a1a1a;line-height:1;letter-spacing:0.000px;text-shadow:0.12px 0 0 #1a1a1a;">2</span><span id="t49" style="position:absolute;left:453.31px;top:168.14px;white-space:nowrap;font-family:'Liberation Sans',sans-serif;font-size:6.8px;font-weight:bold;color:#1a1a1a;line-height:1;letter-spacing:0.000px;text-shadow:0.12px 0 0 #1a1a1a;">3</span><span id="t50" style="position:absolute;left:471.52px;top:169.16px;transform:scaleX(0.9915);transform-origin:0 0;white-space:nowrap;font-family:'Liberation Sans',sans-serif;font-size:5.6px;font-weight:bold;color:#1a1a1a;line-height:1;letter-spacing:-0.031px;text-shadow:0.12px 0 0 #1a1a1a;">ESC</span><span id="t51" style="position:absolute;left:409.61px;top:180.14px;white-space:nowrap;font-family:'Liberation Sans',sans-serif;font-size:6.8px;font-weight:bold;color:#1a1a1a;line-height:1;letter-spacing:0.000px;text-shadow:0.12px 0 0 #1a1a1a;">4</span><span id="t52" style="position:absolute;left:431.31px;top:180.14px;white-space:nowrap;font-family:'Liberation Sans',sans-serif;font-size:6.8px;font-weight:bold;color:#1a1a1a;line-height:1;letter-spacing:0.000px;text-shadow:0.12px 0 0 #1a1a1a;">5</span><span id="t53" style="position:absolute;left:453.31px;top:180.14px;white-space:nowrap;font-family:'Liberation Sans',sans-serif;font-size:6.8px;font-weight:bold;color:#1a1a1a;line-height:1;letter-spacing:0.000px;text-shadow:0.12px 0 0 #1a1a1a;">6</span><span id="t54" style="position:absolute;left:475.31px;top:180.14px;white-space:nowrap;font-family:'Liberation Sans',sans-serif;font-size:6.8px;font-weight:bold;color:#1a1a1a;line-height:1;letter-spacing:0.000px;text-shadow:0.12px 0 0 #1a1a1a;">0</span><span id="t55" style="position:absolute;left:409.61px;top:191.94px;white-space:nowrap;font-family:'Liberation Sans',sans-serif;font-size:6.8px;font-weight:bold;color:#1a1a1a;line-height:1;letter-spacing:0.000px;text-shadow:0.12px 0 0 #1a1a1a;">7</span><span id="t56" style="position:absolute;left:431.31px;top:191.94px;white-space:nowrap;font-family:'Liberation Sans',sans-serif;font-size:6.8px;font-weight:bold;color:#1a1a1a;line-height:1;letter-spacing:0.000px;text-shadow:0.12px 0 0 #1a1a1a;">8</span><span id="t57" style="position:absolute;left:453.31px;top:191.94px;white-space:nowrap;font-family:'Liberation Sans',sans-serif;font-size:6.8px;font-weight:bold;color:#1a1a1a;line-height:1;letter-spacing:0.000px;text-shadow:0.12px 0 0 #1a1a1a;">9</span><span id="t58" style="position:absolute;left:476.25px;top:191.94px;white-space:nowrap;font-family:'Liberation Sans',sans-serif;font-size:6.8px;font-weight:bold;color:#1a1a1a;line-height:1;letter-spacing:0.000px;text-shadow:0.12px 0 0 #1a1a1a;">,</span><span id="t59" style="position:absolute;left:499.30px;top:183.53px;white-space:nowrap;font-family:'Liberation Sans',sans-serif;font-size:8px;font-weight:normal;color:#111;line-height:1;letter-spacing:0.169px;">Enter</span><span id="t60" style="position:absolute;left:294.48px;top:227.80px;transform:scaleX(0.9920);transform-origin:0 0;white-space:nowrap;font-family:'Liberation Sans',sans-serif;font-size:6.5px;font-weight:bold;color:#fff;line-height:1;letter-spacing:-0.024px;text-shadow:0.3px 0 0 #fff;text-shadow:0.35px 0 0 #fff">CV Mode</span><span id="t61" style="position:absolute;left:340.50px;top:228.12px;white-space:nowrap;font-family:'Liberation Sans',sans-serif;font-size:6px;font-weight:normal;color:#dae4f2;line-height:1;letter-spacing:0.000px;">Voltage</span><span id="t62" style="position:absolute;left:522.40px;top:227.71px;white-space:nowrap;font-family:'Liberation Sans',sans-serif;font-size:6.6px;font-weight:bold;color:#dae4f2;line-height:1;letter-spacing:0.000px;text-shadow:0.3px 0 0 #dae4f2;">V</span><span id="t63" style="position:absolute;left:294.89px;top:262.80px;transform:scaleX(0.9668);transform-origin:0 0;white-space:nowrap;font-family:'Liberation Sans',sans-serif;font-size:6.5px;font-weight:bold;color:#fff;line-height:1;letter-spacing:-0.105px;text-shadow:0.3px 0 0 #fff;text-shadow:0.35px 0 0 #fff">CC Mode</span><span id="t64" style="position:absolute;left:340.50px;top:263.12px;white-space:nowrap;font-family:'Liberation Sans',sans-serif;font-size:6px;font-weight:normal;color:#dae4f2;line-height:1;letter-spacing:0.000px;">Current</span><span id="t65" style="position:absolute;left:522.22px;top:262.71px;white-space:nowrap;font-family:'Liberation Sans',sans-serif;font-size:6.6px;font-weight:bold;color:#dae4f2;line-height:1;letter-spacing:0.000px;text-shadow:0.3px 0 0 #dae4f2;">A</span><span id="t66" style="position:absolute;left:294.89px;top:297.80px;transform:scaleX(0.9668);transform-origin:0 0;white-space:nowrap;font-family:'Liberation Sans',sans-serif;font-size:6.5px;font-weight:bold;color:#fff;line-height:1;letter-spacing:-0.105px;text-shadow:0.3px 0 0 #fff;text-shadow:0.35px 0 0 #fff">CR Mode</span><span id="t67" style="position:absolute;left:340.50px;top:298.12px;white-space:nowrap;font-family:'Liberation Sans',sans-serif;font-size:6px;font-weight:normal;color:#dae4f2;line-height:1;letter-spacing:0.000px;">Resistance</span><span id="t68" style="position:absolute;left:522.89px;top:298.30px;transform:scaleX(0.9584);transform-origin:0 0;white-space:nowrap;font-family:'Liberation Sans',sans-serif;font-size:6.5px;font-weight:bold;color:#dae4f2;line-height:1;letter-spacing:-0.243px;text-shadow:0.3px 0 0 #dae4f2;">Oh</span><span id="t69" style="position:absolute;left:293.88px;top:332.80px;transform:scaleX(0.9801);transform-origin:0 0;white-space:nowrap;font-family:'Liberation Sans',sans-serif;font-size:6.5px;font-weight:bold;color:#fff;line-height:1;letter-spacing:-0.065px;text-shadow:0.3px 0 0 #fff;text-shadow:0.35px 0 0 #fff">CW Mode</span><span id="t70" style="position:absolute;left:340.50px;top:333.12px;white-space:nowrap;font-family:'Liberation Sans',sans-serif;font-size:6px;font-weight:normal;color:#dae4f2;line-height:1;letter-spacing:0.000px;">Power</span><span id="t71" style="position:absolute;left:521.48px;top:332.71px;white-space:nowrap;font-family:'Liberation Sans',sans-serif;font-size:6.6px;font-weight:bold;color:#dae4f2;line-height:1;letter-spacing:0.000px;text-shadow:0.3px 0 0 #dae4f2;">W</span><span id="t72" style="position:absolute;left:47.90px;top:372.22px;white-space:nowrap;font-family:'Liberation Sans',sans-serif;font-size:6px;font-weight:normal;color:#dae4f2;line-height:1;letter-spacing:0.006px;">PC Control</span><span id="t73" style="position:absolute;left:47.90px;top:398.62px;white-space:nowrap;font-family:'Liberation Sans',sans-serif;font-size:6px;font-weight:normal;color:#dae4f2;line-height:1;letter-spacing:-0.002px;">Panel Control</span><span id="t74" style="position:absolute;left:47.90px;top:418.72px;white-space:nowrap;font-family:'Liberation Sans',sans-serif;font-size:6px;font-weight:normal;color:#dae4f2;line-height:1;letter-spacing:0.000px;">Local Enable</span><span id="t75" style="position:absolute;left:47.90px;top:445.72px;white-space:nowrap;font-family:'Liberation Sans',sans-serif;font-size:6px;font-weight:normal;color:#dae4f2;line-height:1;letter-spacing:0.000px;">Local Disable</span><span id="t76" style="position:absolute;left:153.00px;top:372.22px;white-space:nowrap;font-family:'Liberation Sans',sans-serif;font-size:6px;font-weight:normal;color:#dae4f2;line-height:1;letter-spacing:0.000px;">Input ON</span><span id="t77" style="position:absolute;left:153.00px;top:398.62px;white-space:nowrap;font-family:'Liberation Sans',sans-serif;font-size:6px;font-weight:normal;color:#dae4f2;line-height:1;letter-spacing:0.000px;">Input OFF</span><span id="t78" style="position:absolute;left:153.00px;top:418.72px;white-space:nowrap;font-family:'Liberation Sans',sans-serif;font-size:6px;font-weight:normal;color:#dae4f2;line-height:1;letter-spacing:0.000px;">Remote Sense</span><span id="t79" style="position:absolute;left:153.00px;top:445.72px;white-space:nowrap;font-family:'Liberation Sans',sans-serif;font-size:6px;font-weight:normal;color:#dae4f2;line-height:1;letter-spacing:0.000px;">Local Sense</span><span id="t80" style="position:absolute;left:258.70px;top:372.22px;white-space:nowrap;font-family:'Liberation Sans',sans-serif;font-size:6px;font-weight:normal;color:#dae4f2;line-height:1;letter-spacing:0.000px;">Short-circuit</span><span id="t81" style="position:absolute;left:258.70px;top:398.62px;white-space:nowrap;font-family:'Liberation Sans',sans-serif;font-size:6px;font-weight:normal;color:#dae4f2;line-height:1;letter-spacing:0.000px;">Open-circuit</span><span id="t82" style="position:absolute;left:352.50px;top:374.32px;white-space:nowrap;font-family:'Liberation Sans',sans-serif;font-size:6px;font-weight:normal;color:#dae4f2;line-height:1;letter-spacing:0.000px;">RV</span><span id="t83" style="position:absolute;left:352.50px;top:392.02px;white-space:nowrap;font-family:'Liberation Sans',sans-serif;font-size:6px;font-weight:normal;color:#dae4f2;line-height:1;letter-spacing:0.000px;">OV</span><span id="t84" style="position:absolute;left:352.50px;top:409.72px;white-space:nowrap;font-family:'Liberation Sans',sans-serif;font-size:6px;font-weight:normal;color:#dae4f2;line-height:1;letter-spacing:0.000px;">OC</span><span id="t85" style="position:absolute;left:352.50px;top:427.32px;white-space:nowrap;font-family:'Liberation Sans',sans-serif;font-size:6px;font-weight:normal;color:#dae4f2;line-height:1;letter-spacing:0.000px;">OP</span><span id="t86" style="position:absolute;left:352.50px;top:444.92px;white-space:nowrap;font-family:'Liberation Sans',sans-serif;font-size:6px;font-weight:normal;color:#dae4f2;line-height:1;letter-spacing:0.000px;">OT</span><span id="t87" style="position:absolute;left:416.20px;top:374.32px;white-space:nowrap;font-family:'Liberation Sans',sans-serif;font-size:6px;font-weight:normal;color:#dae4f2;line-height:1;letter-spacing:0.000px;">CV</span><span id="t88" style="position:absolute;left:416.20px;top:392.02px;white-space:nowrap;font-family:'Liberation Sans',sans-serif;font-size:6px;font-weight:normal;color:#dae4f2;line-height:1;letter-spacing:0.000px;">CC</span><span id="t89" style="position:absolute;left:416.20px;top:409.72px;white-space:nowrap;font-family:'Liberation Sans',sans-serif;font-size:6px;font-weight:normal;color:#dae4f2;line-height:1;letter-spacing:0.000px;">CR</span><span id="t90" style="position:absolute;left:416.20px;top:427.32px;white-space:nowrap;font-family:'Liberation Sans',sans-serif;font-size:6px;font-weight:normal;color:#dae4f2;line-height:1;letter-spacing:0.000px;">CW</span><span id="t91" style="position:absolute;left:416.20px;top:444.92px;white-space:nowrap;font-family:'Liberation Sans',sans-serif;font-size:6px;font-weight:normal;color:#dae4f2;line-height:1;letter-spacing:0.000px;">RX</span><span id="t92" style="position:absolute;left:479.70px;top:374.32px;white-space:nowrap;font-family:'Liberation Sans',sans-serif;font-size:6px;font-weight:normal;color:#dae4f2;line-height:1;letter-spacing:0.000px;">Tran</span><span id="t93" style="position:absolute;left:479.70px;top:392.02px;white-space:nowrap;font-family:'Liberation Sans',sans-serif;font-size:6px;font-weight:normal;color:#dae4f2;line-height:1;letter-spacing:0.000px;">Trigger</span><span id="t94" style="position:absolute;left:479.70px;top:409.72px;white-space:nowrap;font-family:'Liberation Sans',sans-serif;font-size:6px;font-weight:normal;color:#dae4f2;line-height:1;letter-spacing:0.000px;">Sense</span><span id="t95" style="position:absolute;left:479.70px;top:427.32px;white-space:nowrap;font-family:'Liberation Sans',sans-serif;font-size:6px;font-weight:normal;color:#dae4f2;line-height:1;letter-spacing:0.000px;">Unreg</span><span id="t96" style="position:absolute;left:479.70px;top:444.92px;white-space:nowrap;font-family:'Liberation Sans',sans-serif;font-size:6px;font-weight:normal;color:#dae4f2;line-height:1;letter-spacing:0.000px;">TX</span><span id="t97" style="position:absolute;left:22.71px;top:468.82px;transform:scaleX(0.9605);transform-origin:0 0;white-space:nowrap;font-family:'Liberation Sans',sans-serif;font-size:6px;font-weight:bold;color:#fff;line-height:1;letter-spacing:-0.088px;text-shadow:0.3px 0 0 #fff;">Model: M9812B DC Electronic Load</span><span id="t98" style="position:absolute;left:228.51px;top:468.82px;transform:scaleX(0.9688);transform-origin:0 0;white-space:nowrap;font-family:'Liberation Sans',sans-serif;font-size:6px;font-weight:bold;color:#fff;line-height:1;letter-spacing:-0.073px;text-shadow:0.3px 0 0 #fff;">Working Normally</span><span id="t99" style="position:absolute;left:351.71px;top:468.82px;transform:scaleX(0.9833);transform-origin:0 0;white-space:nowrap;font-family:'Liberation Sans',sans-serif;font-size:6px;font-weight:bold;color:#fff;line-height:1;letter-spacing:-0.042px;text-shadow:0.3px 0 0 #fff;">Comm Successful</span><span id="t100" style="position:absolute;left:568.69px;top:62.00px;transform:scaleX(0.9665);transform-origin:0 0;white-space:nowrap;font-family:'Liberation Sans',sans-serif;font-size:6.5px;font-weight:bold;color:#fff;line-height:1;letter-spacing:-0.091px;text-shadow:0.3px 0 0 #fff;">QuickSet</span><span id="t101" style="position:absolute;left:627.08px;top:62.00px;transform:scaleX(0.9981);transform-origin:0 0;white-space:nowrap;font-family:'Liberation Sans',sans-serif;font-size:6.5px;font-weight:bold;color:#f4ffe8;line-height:1;letter-spacing:-0.006px;text-shadow:0.3px 0 0 #f4ffe8;">Program</span><span id="t102" style="position:absolute;left:688.38px;top:62.00px;transform:scaleX(0.9770);transform-origin:0 0;white-space:nowrap;font-family:'Liberation Sans',sans-serif;font-size:6.5px;font-weight:bold;color:#f4ffe8;line-height:1;letter-spacing:-0.061px;text-shadow:0.3px 0 0 #f4ffe8;">AutoTest</span><span id="t103" style="position:absolute;left:558.08px;top:84.80px;transform:scaleX(0.9969);transform-origin:0 0;white-space:nowrap;font-family:'Liberation Sans',sans-serif;font-size:6.5px;font-weight:bold;color:#8a1020;line-height:1;letter-spacing:-0.009px;text-shadow:0.12px 0 0 #8a1020;">HotKey</span><span id="t104" style="position:absolute;left:558.07px;top:185.10px;white-space:nowrap;font-family:'Liberation Sans',sans-serif;font-size:6.5px;font-weight:bold;color:#8a1020;line-height:1;letter-spacing:0.176px;text-shadow:0.12px 0 0 #8a1020;">Transition</span><span id="t105" style="position:absolute;left:558.07px;top:339.00px;white-space:nowrap;font-family:'Liberation Sans',sans-serif;font-size:6.5px;font-weight:bold;color:#8a1020;line-height:1;letter-spacing:0.034px;text-shadow:0.12px 0 0 #8a1020;">Scan</span><span id="t106" style="position:absolute;left:606.96px;top:102.00px;white-space:nowrap;font-family:'Liberation Sans',sans-serif;font-size:6.5px;font-weight:bold;color:#222;line-height:1;letter-spacing:0.000px;text-shadow:0.12px 0 0 #222;">10 V</span><span id="t107" style="position:absolute;left:718.56px;top:102.00px;white-space:nowrap;font-family:'Liberation Sans',sans-serif;font-size:6.5px;font-weight:bold;color:#222;line-height:1;letter-spacing:0.000px;text-shadow:0.12px 0 0 #222;">20 V</span><span id="t108" style="position:absolute;left:608.77px;top:120.90px;white-space:nowrap;font-family:'Liberation Sans',sans-serif;font-size:6.5px;font-weight:bold;color:#222;line-height:1;letter-spacing:0.000px;text-shadow:0.12px 0 0 #222;">0 V</span><span id="t109" style="position:absolute;left:720.37px;top:120.90px;white-space:nowrap;font-family:'Liberation Sans',sans-serif;font-size:6.5px;font-weight:bold;color:#222;line-height:1;letter-spacing:0.000px;text-shadow:0.12px 0 0 #222;">0 V</span><span id="t110" style="position:absolute;left:608.77px;top:140.10px;white-space:nowrap;font-family:'Liberation Sans',sans-serif;font-size:6.5px;font-weight:bold;color:#222;line-height:1;letter-spacing:0.000px;text-shadow:0.12px 0 0 #222;">0 V</span><span id="t111" style="position:absolute;left:720.37px;top:140.10px;white-space:nowrap;font-family:'Liberation Sans',sans-serif;font-size:6.5px;font-weight:bold;color:#222;line-height:1;letter-spacing:0.000px;text-shadow:0.12px 0 0 #222;">0 V</span><span id="t112" style="position:absolute;left:608.77px;top:158.20px;white-space:nowrap;font-family:'Liberation Sans',sans-serif;font-size:6.5px;font-weight:bold;color:#222;line-height:1;letter-spacing:0.000px;text-shadow:0.12px 0 0 #222;">0 V</span><span id="t113" style="position:absolute;left:720.37px;top:158.20px;white-space:nowrap;font-family:'Liberation Sans',sans-serif;font-size:6.5px;font-weight:bold;color:#222;line-height:1;letter-spacing:0.000px;text-shadow:0.12px 0 0 #222;">0 V</span><span id="t114" style="position:absolute;left:610.45px;top:196.61px;transform:scaleX(0.9040);transform-origin:0 0;white-space:nowrap;font-family:'Liberation Sans',sans-serif;font-size:6.6px;font-weight:bold;color:#0c1430;line-height:1;letter-spacing:-0.239px;text-shadow:0.12px 0 0 #0c1430;">LevelA WidthA Rising LevelB WidthB Falling</span><span id="t115" style="position:absolute;left:613.67px;top:215.15px;white-space:nowrap;font-family:'Liberation Sans',sans-serif;font-size:6.5px;font-weight:bold;color:#222;line-height:1;letter-spacing:0.162px;text-shadow:0.12px 0 0 #222;">1A 200ms 200ms 2A 200ms 200ms</span><span id="t116" style="position:absolute;left:606.17px;top:233.25px;white-space:nowrap;font-family:'Liberation Sans',sans-serif;font-size:6.5px;font-weight:bold;color:#222;line-height:1;letter-spacing:0.158px;text-shadow:0.12px 0 0 #222;">1A 1000ms 1000ms 2A 1000ms 1000ms</span><span id="t117" style="position:absolute;left:613.67px;top:251.15px;white-space:nowrap;font-family:'Liberation Sans',sans-serif;font-size:6.5px;font-weight:bold;color:#222;line-height:1;letter-spacing:0.162px;text-shadow:0.12px 0 0 #222;">0A 200ms 200ms 2A 200ms 200ms</span><span id="t118" style="position:absolute;left:565.70px;top:269.80px;transform:scaleX(0.9312);transform-origin:0 0;white-space:nowrap;font-family:'Liberation Sans',sans-serif;font-size:6.5px;font-weight:bold;color:#8a1020;line-height:1;letter-spacing:-0.164px;text-shadow:0.12px 0 0 #8a1020;">Trigger Set</span><span id="t119" style="position:absolute;left:592.73px;top:282.62px;transform:scaleX(0.8980);transform-origin:0 0;white-space:nowrap;font-family:'Liberation Sans',sans-serif;font-size:6px;font-weight:normal;color:#1a1a1a;line-height:1;letter-spacing:-0.250px;">Continuous</span><span id="t120" style="position:absolute;left:592.73px;top:295.02px;transform:scaleX(0.8995);transform-origin:0 0;white-space:nowrap;font-family:'Liberation Sans',sans-serif;font-size:6px;font-weight:normal;color:#1a1a1a;line-height:1;letter-spacing:-0.269px;">Pulse</span><span id="t121" style="position:absolute;left:592.72px;top:308.02px;transform:scaleX(0.9372);transform-origin:0 0;white-space:nowrap;font-family:'Liberation Sans',sans-serif;font-size:6px;font-weight:normal;color:#1a1a1a;line-height:1;letter-spacing:-0.153px;">Toggle</span><span id="t122" style="position:absolute;left:726.70px;top:279.27px;white-space:nowrap;font-family:'Liberation Sans',sans-serif;font-size:7px;font-weight:normal;color:#a8a8a8;line-height:1;letter-spacing:0.000px;">Stop</span><span id="t123" style="position:absolute;left:655.78px;top:341.85px;transform:scaleX(0.9807);transform-origin:0 0;white-space:nowrap;font-family:'Liberation Sans',sans-serif;font-size:6.5px;font-weight:bold;color:#222;line-height:1;letter-spacing:-0.046px;text-shadow:0.12px 0 0 #222;">I-V Curve</span><span id="t124" style="position:absolute;left:578.67px;top:356.10px;white-space:nowrap;font-family:'Liberation Sans',sans-serif;font-size:6.5px;font-weight:bold;color:#1a1a1a;line-height:1;letter-spacing:0.000px;text-shadow:0.12px 0 0 #1a1a1a;">Begin Value</span><span id="t125" style="position:absolute;left:705.86px;top:353.90px;white-space:nowrap;font-family:'Liberation Sans',sans-serif;font-size:6.5px;font-weight:bold;color:#1a1a1a;line-height:1;letter-spacing:0.000px;text-shadow:0.12px 0 0 #1a1a1a;">1,000</span><span id="t126" style="position:absolute;left:758.25px;top:355.97px;white-space:nowrap;font-family:'Liberation Sans',sans-serif;font-size:7px;font-weight:bold;color:#1a1a1a;line-height:1;letter-spacing:0.000px;text-shadow:0.12px 0 0 #1a1a1a;">V</span><span id="t127" style="position:absolute;left:578.67px;top:374.20px;white-space:nowrap;font-family:'Liberation Sans',sans-serif;font-size:6.5px;font-weight:bold;color:#1a1a1a;line-height:1;letter-spacing:0.000px;text-shadow:0.12px 0 0 #1a1a1a;">End Value</span><span id="t128" style="position:absolute;left:704.05px;top:372.00px;white-space:nowrap;font-family:'Liberation Sans',sans-serif;font-size:6.5px;font-weight:bold;color:#1a1a1a;line-height:1;letter-spacing:0.000px;text-shadow:0.12px 0 0 #1a1a1a;">10,000</span><span id="t129" style="position:absolute;left:758.25px;top:374.07px;white-space:nowrap;font-family:'Liberation Sans',sans-serif;font-size:7px;font-weight:bold;color:#1a1a1a;line-height:1;letter-spacing:0.000px;text-shadow:0.12px 0 0 #1a1a1a;">V</span><span id="t130" style="position:absolute;left:578.67px;top:392.50px;white-space:nowrap;font-family:'Liberation Sans',sans-serif;font-size:6.5px;font-weight:bold;color:#1a1a1a;line-height:1;letter-spacing:0.000px;text-shadow:0.12px 0 0 #1a1a1a;">Step Value</span><span id="t131" style="position:absolute;left:705.86px;top:390.30px;white-space:nowrap;font-family:'Liberation Sans',sans-serif;font-size:6.5px;font-weight:bold;color:#1a1a1a;line-height:1;letter-spacing:0.000px;text-shadow:0.12px 0 0 #1a1a1a;">0,100</span><span id="t132" style="position:absolute;left:758.25px;top:392.37px;white-space:nowrap;font-family:'Liberation Sans',sans-serif;font-size:7px;font-weight:bold;color:#1a1a1a;line-height:1;letter-spacing:0.000px;text-shadow:0.12px 0 0 #1a1a1a;">V</span><span id="t133" style="position:absolute;left:578.67px;top:410.60px;white-space:nowrap;font-family:'Liberation Sans',sans-serif;font-size:6.5px;font-weight:bold;color:#1a1a1a;line-height:1;letter-spacing:0.000px;text-shadow:0.12px 0 0 #1a1a1a;">Delay Time</span><span id="t134" style="position:absolute;left:707.67px;top:408.40px;white-space:nowrap;font-family:'Liberation Sans',sans-serif;font-size:6.5px;font-weight:bold;color:#1a1a1a;line-height:1;letter-spacing:0.000px;text-shadow:0.12px 0 0 #1a1a1a;">1,00</span><span id="t135" style="position:absolute;left:758.25px;top:410.47px;white-space:nowrap;font-family:'Liberation Sans',sans-serif;font-size:7px;font-weight:bold;color:#1a1a1a;line-height:1;letter-spacing:0.000px;text-shadow:0.12px 0 0 #1a1a1a;">S</span><span id="t136" style="position:absolute;left:613.68px;top:435.50px;white-space:nowrap;font-family:'Liberation Sans',sans-serif;font-size:6.5px;font-weight:bold;color:#111;line-height:1;letter-spacing:0.000px;text-shadow:0.12px 0 0 #111;">Run</span><span id="t137" style="position:absolute;left:709.51px;top:435.50px;white-space:nowrap;font-family:'Liberation Sans',sans-serif;font-size:6.5px;font-weight:normal;color:#b0b0b0;line-height:1;letter-spacing:0.000px;">Stop</span></div></body></html>
